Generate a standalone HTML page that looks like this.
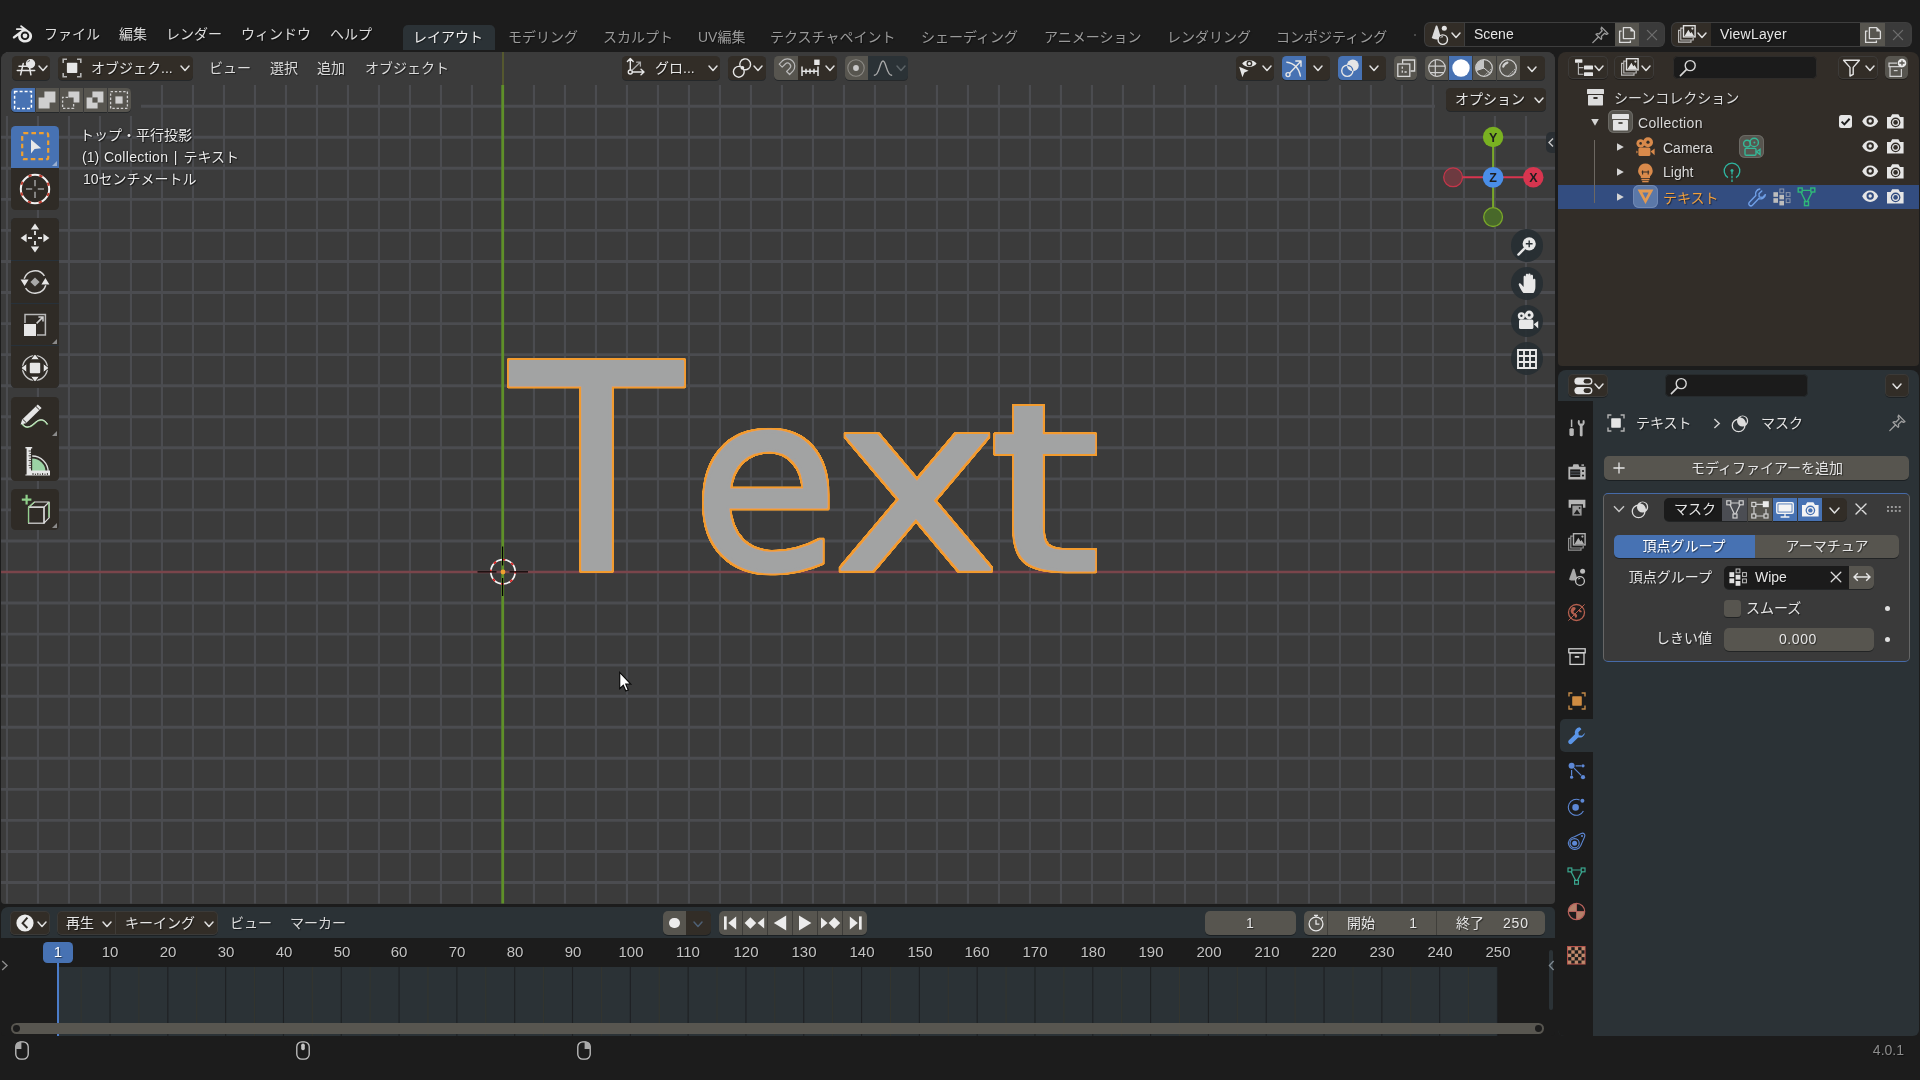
<!DOCTYPE html>
<html lang="ja"><head><meta charset="utf-8"><title>Blender</title>
<style>
html,body{margin:0;padding:0;background:#1c1c1c;}
body{width:1920px;height:1080px;overflow:hidden;position:relative;font-family:"Liberation Sans","Noto Sans CJK JP",sans-serif;}
#root{position:absolute;left:0;top:0;width:1920px;height:1080px;overflow:hidden;background:#1c1c1c;}
#root div,#root svg{position:absolute;}
.t{height:20px;line-height:20px;white-space:nowrap;font-size:14px;will-change:transform;text-shadow:1px 1px 1px rgba(0,0,0,.5);}
svg{overflow:visible;}
</style></head><body><div id="root">

<svg style="left:11.5px;top:24.5px;" width="21" height="19" viewBox="0 0 21 19"><path d="M1.2 11.4L9.8 5H4.8C3.6 5 3.6 3.2 4.8 3.2H10.6L8.6 1.9C7.6 1.2 8.6 -0.2 9.7 0.6L18 6.8C22.4 10.6 19.6 17.6 13.2 17.6C8.6 17.6 5.6 14.2 6.2 10.8L2.4 13.4C1.2 14.2 0.2 12.2 1.2 11.4Z" fill="#e8e8e8"/><circle cx="13" cy="10.8" r="4.3" fill="#1c1c1c"/><circle cx="13" cy="10.8" r="2.4" fill="#e8e8e8"/></svg>
<div class="t" style="top:24.3px;color:#dddddd;font-size:14px;left:44.3px;">ファイル</div>
<div class="t" style="top:24.3px;color:#dddddd;font-size:14px;left:118.5px;">編集</div>
<div class="t" style="top:24.3px;color:#dddddd;font-size:14px;left:165.8px;">レンダー</div>
<div class="t" style="top:24.3px;color:#dddddd;font-size:14px;left:240.8px;">ウィンドウ</div>
<div class="t" style="top:24.3px;color:#dddddd;font-size:14px;left:329.8px;">ヘルプ</div>
<div style="left:402.5px;top:25px;width:92.5px;height:25px;background:#2b3236;border-radius:5px 5px 0 0;"></div>
<div class="t" style="top:27.3px;color:#f0f0f0;font-size:14px;left:412.8px;">レイアウト</div>
<div class="t" style="top:27.3px;color:#9a9a9a;font-size:14px;left:508.2px;">モデリング</div>
<div class="t" style="top:27.3px;color:#9a9a9a;font-size:14px;left:603px;">スカルプト</div>
<div class="t" style="top:27.3px;color:#9a9a9a;font-size:14px;left:697.6px;">UV編集</div>
<div class="t" style="top:27.3px;color:#9a9a9a;font-size:14px;left:769.8px;">テクスチャペイント</div>
<div class="t" style="top:27.3px;color:#9a9a9a;font-size:14px;left:920.5px;">シェーディング</div>
<div class="t" style="top:27.3px;color:#9a9a9a;font-size:14px;left:1043.7px;">アニメーション</div>
<div class="t" style="top:27.3px;color:#9a9a9a;font-size:14px;left:1167.3px;">レンダリング</div>
<div class="t" style="top:27.3px;color:#9a9a9a;font-size:14px;left:1276.2px;">コンポジティング</div>
<div style="left:1414.2px;top:34.3px;width:1.8px;height:2px;background:#5a5a5a;border-radius:1px;"></div>
<div style="left:1425.3px;top:22.8px;width:239.2px;height:23.6px;background:#3e3e3e;border-radius:5px;box-shadow:0 0 0 1px #3e3e3e;"></div>
<div style="left:1425.3px;top:22.8px;width:39.2px;height:23.6px;background:#322d27;border-radius:5px 0 0 5px;"></div>
<div style="left:1465px;top:22.8px;width:149.6px;height:23.6px;background:#1b1b1b;"></div>
<div style="left:1614.6px;top:22.8px;width:24.8px;height:23.6px;background:#57554f;"></div>
<div style="left:1639.4px;top:22.8px;width:25.1px;height:23.6px;background:#3a3a3a;border-radius:0 5px 5px 0;"></div>
<svg style="left:1430.2px;top:24.2px;" width="22" height="22" viewBox="0 0 20 20"><path d="M5.2 1.8C6 1.2 6.6 1.4 7 2.4L10 12.6C8.6 14.2 4 14.6 1.6 12.8Z" fill="#dcdcdc"/><circle cx="13" cy="3.9" r="2.3" fill="#e4e4e4"/><circle cx="11.6" cy="14.2" r="4.3" stroke="#e4e4e4" stroke-width="1.3" fill="#322d27"/><path d="M9.6 12.4A2.6 2.6 0 0 1 11.8 11.6" stroke="#e4e4e4" stroke-width=".9" fill="none"/></svg>
<svg style="left:1450.8px;top:31.95px;" width="10" height="6.5" viewBox="0 0 10 6.5"><path d="M1 1 L5 5.5 L9 1" fill="none" stroke="#e0e0e0" stroke-width="1.5" stroke-linecap="round" stroke-linejoin="round"/></svg>
<div class="t" style="top:24.2px;color:#e6e6e6;font-size:14px;left:1474px;">Scene</div>
<svg style="left:1591px;top:24.5px;" width="20" height="20" viewBox="0 0 20 20"><g stroke="#9c9c9c" stroke-width="1.3" fill="none" stroke-linejoin="round" stroke-linecap="round"><path d="M10.6 2.2L17 8.6L15.4 9.4L13.6 8.2L10.4 11.4C11 12.8 10.8 13.6 10.2 14.4L5 9.2C5.8 8.6 6.6 8.4 8 9L11.2 5.8L10 4Z"/><path d="M7.4 12L1.8 17.6"/></g></svg>
<svg style="left:1618px;top:25.6px;" width="18" height="18" viewBox="0 0 18 18"><g stroke="#dcdcdc" stroke-width="1.3" fill="none" stroke-linejoin="round"><path d="M5.4 1.6H12.6L16.4 5.4V12.6H5.4Z"/><path d="M3.6 5.2H1.6V16.4H12.4V14.4"/></g><path d="M12.4 1.8V5.6H16.2Z" fill="#dcdcdc"/></svg>
<svg style="left:1646px;top:28.8px;" width="12" height="12" viewBox="0 0 12 12"><path d="M1.4 1.4L10.6 10.6M10.6 1.4L1.4 10.6" stroke="#6e6e6e" stroke-width="1.3" stroke-linecap="round"/></svg>
<div style="left:1671.5px;top:22.8px;width:239px;height:23.6px;background:#3e3e3e;border-radius:5px;box-shadow:0 0 0 1px #3e3e3e;"></div>
<div style="left:1671.5px;top:22.8px;width:39.1px;height:23.6px;background:#322d27;border-radius:5px 0 0 5px;"></div>
<div style="left:1711.1px;top:22.8px;width:149.3px;height:23.6px;background:#1b1b1b;"></div>
<div style="left:1860.4px;top:22.8px;width:25px;height:23.6px;background:#57554f;"></div>
<div style="left:1885.4px;top:22.8px;width:25.1px;height:23.6px;background:#3a3a3a;border-radius:0 5px 5px 0;"></div>
<svg style="left:1676.5px;top:24.4px;" width="20" height="20" viewBox="0 0 20 20"><g stroke="#e0e0e0" stroke-width="1.2" fill="none" opacity=".8"><path d="M3.6 6.4H1.6V18.2H14V16.2"/><path d="M5.8 4.2H3.8V16H16.2V14"/></g><rect x="6.5" y="1.7" width="11.6" height="11.2" fill="#322d27" stroke="#e0e0e0" stroke-width="1.4"/><path d="M7.6 12L11.4 5.8L13.4 9.2L14.6 8L17 12Z" fill="#e0e0e0"/><circle cx="15.4" cy="4.6" r="1.1" fill="#e0e0e0"/></svg>
<svg style="left:1697.2px;top:31.95px;" width="10" height="6.5" viewBox="0 0 10 6.5"><path d="M1 1 L5 5.5 L9 1" fill="none" stroke="#e0e0e0" stroke-width="1.5" stroke-linecap="round" stroke-linejoin="round"/></svg>
<div class="t" style="top:24.2px;color:#e6e6e6;font-size:14px;letter-spacing:0.2px;left:1720.3px;">ViewLayer</div>
<svg style="left:1864px;top:25.6px;" width="18" height="18" viewBox="0 0 18 18"><g stroke="#dcdcdc" stroke-width="1.3" fill="none" stroke-linejoin="round"><path d="M5.4 1.6H12.6L16.4 5.4V12.6H5.4Z"/><path d="M3.6 5.2H1.6V16.4H12.4V14.4"/></g><path d="M12.4 1.8V5.6H16.2Z" fill="#dcdcdc"/></svg>
<svg style="left:1892px;top:28.8px;" width="12" height="12" viewBox="0 0 12 12"><path d="M1.4 1.4L10.6 10.6M10.6 1.4L1.4 10.6" stroke="#6e6e6e" stroke-width="1.3" stroke-linecap="round"/></svg>
<div id="vp" style="left:1px;top:52px;width:1554px;height:851.6px;background:#3b3b3b;border-radius:8px 8px 4px 4px;overflow:hidden;">
<svg style="left:0px;top:0px;" width="1554" height="851.6" viewBox="1 52 1554 851.6"><path d="M6.95 52 V903.6 M37.95 52 V903.6 M68.95 52 V903.6 M99.95 52 V903.6 M130.95 52 V903.6 M161.95 52 V903.6 M192.95 52 V903.6 M223.95 52 V903.6 M254.95 52 V903.6 M285.95 52 V903.6 M316.95 52 V903.6 M347.95 52 V903.6 M378.95 52 V903.6 M409.95 52 V903.6 M440.95 52 V903.6 M471.95 52 V903.6 M533.95 52 V903.6 M564.95 52 V903.6 M595.95 52 V903.6 M626.95 52 V903.6 M657.95 52 V903.6 M688.95 52 V903.6 M719.95 52 V903.6 M750.95 52 V903.6 M781.95 52 V903.6 M812.95 52 V903.6 M843.95 52 V903.6 M874.95 52 V903.6 M905.95 52 V903.6 M936.95 52 V903.6 M967.95 52 V903.6 M998.95 52 V903.6 M1029.95 52 V903.6 M1060.95 52 V903.6 M1091.95 52 V903.6 M1122.95 52 V903.6 M1153.95 52 V903.6 M1184.95 52 V903.6 M1215.95 52 V903.6 M1246.95 52 V903.6 M1277.95 52 V903.6 M1308.95 52 V903.6 M1339.95 52 V903.6 M1370.95 52 V903.6 M1401.95 52 V903.6 M1432.95 52 V903.6 M1463.95 52 V903.6 M1494.95 52 V903.6 M1525.95 52 V903.6 M1556.95 52 V903.6" stroke="#4b4c50" stroke-width="2.1" fill="none"/><path d="M1 75.15 H1555 M1 106.20 H1555 M1 137.26 H1555 M1 168.31 H1555 M1 199.36 H1555 M1 230.42 H1555 M1 261.47 H1555 M1 292.52 H1555 M1 323.58 H1555 M1 354.63 H1555 M1 385.68 H1555 M1 416.74 H1555 M1 447.79 H1555 M1 478.84 H1555 M1 509.89 H1555 M1 540.95 H1555 M1 603.05 H1555 M1 634.11 H1555 M1 665.16 H1555 M1 696.21 H1555 M1 727.26 H1555 M1 758.32 H1555 M1 789.37 H1555 M1 820.42 H1555 M1 851.48 H1555 M1 882.53 H1555" stroke="#4b4c50" stroke-width="2.9" fill="none"/><path d="M1 571.9 H1555" stroke="#7a454b" stroke-width="2.5" fill="none"/><path d="M502.7 52 V903.6" stroke="#5f9029" stroke-width="2.8" fill="none"/><defs><clipPath id="tclip" clipPathUnits="userSpaceOnUse"><rect x="980" y="405.9" width="140" height="200"/></clipPath><filter id="selol" x="-3%" y="-6%" width="106%" height="112%"><feMorphology in="SourceAlpha" operator="dilate" radius="1.7" result="d"/><feGaussianBlur in="d" stdDeviation="0.45" result="db"/><feComponentTransfer in="db" result="dd"><feFuncA type="linear" slope="2.2" intercept="-0.55"/></feComponentTransfer><feFlood flood-color="#f29b2e"/><feComposite in2="dd" operator="in" result="o"/><feMerge><feMergeNode in="o"/><feMergeNode in="SourceGraphic"/></feMerge></filter></defs><g filter="url(#selol)"><text transform="matrix(0.9729 0 0 0.9951 511.21 569.60)" x="0" y="0" font-family="DejaVu Sans, sans-serif" font-size="287" stroke-linejoin="round" fill="#a2a3a3" stroke="#a2a3a3" stroke-width="3.049">T</text><text transform="matrix(0.8298 0 0 0.8500 692.25 568.64)" x="0" y="0" font-family="DejaVu Sans, sans-serif" font-size="287" stroke-linejoin="round" fill="#a2a3a3" stroke="#a2a3a3" stroke-width="3.572">e</text><text transform="matrix(0.9698 0 0 0.8537 834.08 569.40)" x="0" y="0" font-family="DejaVu Sans, sans-serif" font-size="287" stroke-linejoin="round" fill="#a2a3a3" stroke="#a2a3a3" stroke-width="3.290">x</text><g clip-path="url(#tclip)"><text transform="matrix(0.9872 0 0 0.8566 989.28 570.00)" x="0" y="0" font-family="DejaVu Sans, sans-serif" font-size="287" stroke-linejoin="round" fill="#a2a3a3" stroke="#a2a3a3" stroke-width="3.254">t</text></g></g></svg>
</div>
<div style="left:1px;top:52px;width:1554px;height:33px;background:#3b3b3b;border-radius:8px 8px 0 0;"></div>
<div style="left:501.6px;top:52px;width:2.3px;height:33px;background:#55582f;"></div>
<div style="left:1px;top:85px;width:140px;height:30.5px;background:#3b3b3b;"></div>
<div style="left:1434.5px;top:85px;width:120.5px;height:30.5px;background:#3b3b3b;"></div>
<div style="left:12px;top:56px;width:38px;height:23.5px;background:#322d27;border-radius:4.5px;box-shadow:0 1px 0 rgba(20,25,30,.55);"></div>
<svg style="left:16px;top:57.5px;" width="20" height="20" viewBox="0 0 20 20"><g stroke="#e6e6e6" stroke-width="1.5" fill="none" stroke-linecap="round"><path d="M3 8.2H10.5M1.3 12.4H18.7M7.2 5.6L4.6 16.8M13.7 10.3L14.9 16.8"/></g><circle cx="14.5" cy="5.7" r="4.7" fill="#e6e6e6"/><path d="M11.5 4.3A3.3 3.3 0 0 1 14 2.6" stroke="#555" stroke-width="1" fill="none"/></svg>
<svg style="left:37.6px;top:65.45px;" width="10" height="6.5" viewBox="0 0 10 6.5"><path d="M1 1 L5 5.5 L9 1" fill="none" stroke="#e0e0e0" stroke-width="1.5" stroke-linecap="round" stroke-linejoin="round"/></svg>
<div style="left:58px;top:56px;width:135px;height:23.5px;background:#322d27;border-radius:4.5px;box-shadow:0 1px 0 rgba(20,25,30,.55);"></div>
<svg style="left:62px;top:57.5px;" width="20" height="20" viewBox="0 0 20 20"><path d="M1.2 5V1.3H5M15 1.3H18.8V5M18.8 15V18.7H15M5 18.7H1.2V15" stroke="#b4b4b4" stroke-width="1.6" fill="none"/><rect x="4.9" y="4.7" width="10.4" height="10.4" rx="0.8" fill="#e6e6e6"/></svg>
<div class="t" style="top:57.5px;color:#e6e6e6;font-size:14px;left:90.5px;">オブジェク...</div>
<svg style="left:179.5px;top:65.45px;" width="10" height="6.5" viewBox="0 0 10 6.5"><path d="M1 1 L5 5.5 L9 1" fill="none" stroke="#e0e0e0" stroke-width="1.5" stroke-linecap="round" stroke-linejoin="round"/></svg>
<div class="t" style="top:57.5px;color:#dcdcdc;font-size:14px;left:209px;">ビュー</div>
<div class="t" style="top:57.5px;color:#dcdcdc;font-size:14px;left:270px;">選択</div>
<div class="t" style="top:57.5px;color:#dcdcdc;font-size:14px;left:317px;">追加</div>
<div class="t" style="top:57.5px;color:#dcdcdc;font-size:14px;left:364.5px;">オブジェクト</div>
<div style="left:622px;top:56px;width:98px;height:23.5px;background:#322d27;border-radius:4.5px;box-shadow:0 1px 0 rgba(20,25,30,.55);"></div>
<svg style="left:623.5px;top:55.5px;" width="22" height="22" viewBox="0 0 22 22"><g stroke="#e6e6e6" stroke-width="1.4" fill="none" stroke-linecap="round" stroke-linejoin="round"><path d="M6.3 14V3M3.4 5.6L6.3 2.6L9.2 5.6M8.3 16H19.5M17 13.2L20 16L17 18.8"/><circle cx="6.3" cy="16" r="2"/></g><g stroke="#a8a8a8" stroke-width="1.3" fill="none" stroke-linecap="round"><path d="M8 14.3L16 6.5M12.6 6.2H16.4V10"/></g></svg>
<div class="t" style="top:57.5px;color:#e6e6e6;font-size:14px;left:654.5px;">グロ...</div>
<svg style="left:707.5px;top:65.45px;" width="10" height="6.5" viewBox="0 0 10 6.5"><path d="M1 1 L5 5.5 L9 1" fill="none" stroke="#e0e0e0" stroke-width="1.5" stroke-linecap="round" stroke-linejoin="round"/></svg>
<div style="left:728px;top:56px;width:38px;height:23.5px;background:#322d27;border-radius:4.5px;box-shadow:0 1px 0 rgba(20,25,30,.55);"></div>
<svg style="left:732px;top:57.5px;" width="20" height="20" viewBox="0 0 20 20"><g stroke="#e6e6e6" stroke-width="1.4" fill="none"><circle cx="6.8" cy="13.8" r="5.4"/><path d="M8.2 8.4A5.4 5.4 0 1 1 12 11.6"/></g><circle cx="10.4" cy="9.8" r="1.9" fill="#e6e6e6"/></svg>
<svg style="left:753.4px;top:65.45px;" width="10" height="6.5" viewBox="0 0 10 6.5"><path d="M1 1 L5 5.5 L9 1" fill="none" stroke="#e0e0e0" stroke-width="1.5" stroke-linecap="round" stroke-linejoin="round"/></svg>
<div style="left:774px;top:56px;width:23.5px;height:23.5px;background:#57554f;border-radius:4.5px 0 0 4.5px;box-shadow:0 1px 0 rgba(20,25,30,.55);"></div>
<div style="left:797.5px;top:56px;width:39.5px;height:23.5px;background:#322d27;border-radius:0 4.5px 4.5px 0;box-shadow:0 1px 0 rgba(20,25,30,.55);"></div>
<svg style="left:775.8px;top:57.5px;" width="20" height="20" viewBox="0 0 20 20"><path d="M3.2 7.6L6.2 10.6L9.3 7.5A3.1 3.1 0 0 1 13.7 11.9L10.6 15L13.6 18L16.9 14.7A7.4 7.4 0 0 0 6.4 4.3Z" transform="translate(0,-1.5)" stroke="#b9b9b9" stroke-width="1.2" fill="none" stroke-linejoin="round"/></svg>
<svg style="left:799.5px;top:56.5px;" width="20" height="20" viewBox="0 0 20 20"><path d="M2 9.5V19M18 9.5V19M2 14.3H18M6 11.8V16.8M10 11.8V16.8M14 11.8V16.8" stroke="#e6e6e6" stroke-width="1.5" fill="none"/><rect x="14.2" y="2.6" width="5.4" height="5.4" fill="#e6e6e6"/></svg>
<svg style="left:824.7px;top:65.45px;" width="10" height="6.5" viewBox="0 0 10 6.5"><path d="M1 1 L5 5.5 L9 1" fill="none" stroke="#e0e0e0" stroke-width="1.5" stroke-linecap="round" stroke-linejoin="round"/></svg>
<div style="left:845px;top:56px;width:23px;height:23.5px;background:#57554f;border-radius:4.5px 0 0 4.5px;box-shadow:0 1px 0 rgba(20,25,30,.55);"></div>
<div style="left:868px;top:56px;width:40px;height:23.5px;background:#2b3236;border-radius:0 4.5px 4.5px 0;box-shadow:0 1px 0 rgba(20,25,30,.55);"></div>
<svg style="left:846.4px;top:57.5px;" width="20" height="20" viewBox="0 0 20 20"><circle cx="10" cy="10" r="8.2" stroke="#8d8b86" stroke-width="1.1" fill="none"/><circle cx="10" cy="10" r="2.9" fill="#c8c8c8"/></svg>
<svg style="left:873px;top:57.5px;" width="20" height="20" viewBox="0 0 20 20"><path d="M1.4 17.3C6.5 17.3 6.8 3 10 3C13.2 3 13.5 17.3 18.6 17.3" stroke="#aaa" stroke-width="1.4" fill="none" stroke-linecap="round"/></svg>
<svg style="left:895.8px;top:65.45px;" width="10" height="6.5" viewBox="0 0 10 6.5"><path d="M1 1 L5 5.5 L9 1" fill="none" stroke="#5d6468" stroke-width="1.5" stroke-linecap="round" stroke-linejoin="round"/></svg>
<div style="left:1236px;top:56px;width:38px;height:23.5px;background:#322d27;border-radius:4.5px;box-shadow:0 1px 0 rgba(20,25,30,.55);"></div>
<svg style="left:1238px;top:57.5px;" width="20" height="20" viewBox="0 0 20 20"><path d="M4.2 5.6C7 1 15.6 1 18.6 5.6C15.6 10.2 7 10.2 4.2 5.6Z" fill="#e6e6e6"/><circle cx="11.4" cy="5.4" r="2.9" fill="#322d27"/><circle cx="11.4" cy="5.4" r="1.5" fill="#e6e6e6"/><path d="M1.2 8.8L10.6 12.8L6.4 14.4L4.4 19.2Z" fill="#e6e6e6"/></svg>
<svg style="left:1261.6px;top:65.45px;" width="10" height="6.5" viewBox="0 0 10 6.5"><path d="M1 1 L5 5.5 L9 1" fill="none" stroke="#e0e0e0" stroke-width="1.5" stroke-linecap="round" stroke-linejoin="round"/></svg>
<div style="left:1282px;top:56px;width:23.5px;height:23.5px;background:#4772b3;border-radius:4.5px 0 0 4.5px;box-shadow:0 1px 0 rgba(20,25,30,.55);"></div>
<div style="left:1305.5px;top:56px;width:24.5px;height:23.5px;background:#322d27;border-radius:0 4.5px 4.5px 0;box-shadow:0 1px 0 rgba(20,25,30,.55);"></div>
<svg style="left:1283.6px;top:57.5px;" width="20" height="20" viewBox="0 0 20 20"><g stroke="#e6e6e6" stroke-width="1.4" fill="none" stroke-linecap="round" stroke-linejoin="round"><path d="M2.8 4.2C10 5 15.2 10.4 16.4 18"/><path d="M5.6 15.2L16.6 3.4M11.8 3H17V8.2"/><circle cx="4" cy="16.6" r="2" fill="#4772b3"/></g></svg>
<svg style="left:1312.6px;top:65.45px;" width="10" height="6.5" viewBox="0 0 10 6.5"><path d="M1 1 L5 5.5 L9 1" fill="none" stroke="#e0e0e0" stroke-width="1.5" stroke-linecap="round" stroke-linejoin="round"/></svg>
<div style="left:1338px;top:56px;width:23.5px;height:23.5px;background:#4772b3;border-radius:4.5px 0 0 4.5px;box-shadow:0 1px 0 rgba(20,25,30,.55);"></div>
<div style="left:1361.5px;top:56px;width:24.5px;height:23.5px;background:#322d27;border-radius:0 4.5px 4.5px 0;box-shadow:0 1px 0 rgba(20,25,30,.55);"></div>
<svg style="left:1340px;top:57.5px;" width="20" height="20" viewBox="0 0 20 20"><circle cx="12.8" cy="7.4" r="5.9" fill="#e6e6e6"/><circle cx="7.3" cy="12.8" r="5.6" stroke="#e6e6e6" stroke-width="1.4" fill="none"/><path d="M7.6 7.4A5.6 5.6 0 0 1 12.8 12.6" stroke="#4772b3" stroke-width="1.3" fill="none"/></svg>
<svg style="left:1368.5px;top:65.45px;" width="10" height="6.5" viewBox="0 0 10 6.5"><path d="M1 1 L5 5.5 L9 1" fill="none" stroke="#e0e0e0" stroke-width="1.5" stroke-linecap="round" stroke-linejoin="round"/></svg>
<div style="left:1394px;top:56px;width:23px;height:23.5px;background:#57554f;border-radius:4.5px;box-shadow:0 1px 0 rgba(20,25,30,.55);"></div>
<svg style="left:1395.6px;top:57.5px;" width="20" height="20" viewBox="0 0 20 20"><g stroke="#d8d8d8" stroke-width="1.3" fill="none"><path d="M6.6 5.6V2H18.6V13H14.6"/><rect x="1.8" y="6" width="12" height="12.4"/><path d="M6.3 8.6V14H11" stroke-dasharray="2.2 1.6"/></g></svg>
<div style="left:1425px;top:56px;width:23.3px;height:24px;background:#57554f;border-radius:4.5px 0 0 4.5px;box-shadow:0 1px 0 rgba(20,25,30,.55);"></div>
<div style="left:1449px;top:56px;width:23.3px;height:24px;background:#4772b3;box-shadow:0 1px 0 rgba(20,25,30,.55);"></div>
<div style="left:1473px;top:56px;width:23.3px;height:24px;background:#57554f;box-shadow:0 1px 0 rgba(20,25,30,.55);"></div>
<div style="left:1497px;top:56px;width:23.3px;height:24px;background:#57554f;box-shadow:0 1px 0 rgba(20,25,30,.55);"></div>
<div style="left:1520.3px;top:56px;width:24.7px;height:24px;background:#322d27;border-radius:0 4.5px 4.5px 0;box-shadow:0 1px 0 rgba(20,25,30,.55);"></div>
<svg style="left:1426.6px;top:57.7px;" width="20" height="20" viewBox="0 0 20 20"><g stroke="#d0d0d0" stroke-width="1.2" fill="none"><circle cx="10" cy="10" r="8.3"/><path d="M1.8 8.2H18.2M8.3 1.8V18.2M3 14.6H17"/></g></svg>
<svg style="left:1450.6px;top:57.7px;" width="20" height="20" viewBox="0 0 20 20"><circle cx="10" cy="10" r="8.7" fill="#fff"/></svg>
<svg style="left:1474.4px;top:57.7px;" width="20" height="20" viewBox="0 0 20 20"><circle cx="10" cy="10" r="8.3" stroke="#d0d0d0" stroke-width="1.2" fill="none"/><path d="M10 1.7V10L2.4 12.6A8.3 8.3 0 0 1 10 1.7Z" fill="#c4c4c4"/><path d="M2.4 12.6L10 10L16.4 15.6" stroke="#d0d0d0" stroke-width="1" fill="none"/><path d="M12.5 17.2L17.8 12M14.8 17L18.2 13.6M10.4 17.6L17 11" stroke="#c4c4c4" stroke-width=".9" stroke-dasharray="1.5 1.2"/></svg>
<svg style="left:1498.4px;top:57.7px;" width="20" height="20" viewBox="0 0 20 20"><circle cx="10" cy="10" r="8.3" stroke="#d0d0d0" stroke-width="1.2" fill="none"/><path d="M5.2 8.6A6 6 0 0 1 9.4 4.6" stroke="#cfcfcf" stroke-width="2.2" stroke-linecap="round" fill="none"/><path d="M12.5 17.2L17.8 12M14.8 17L18.2 13.6M10.4 17.6L17 11" stroke="#c4c4c4" stroke-width=".9" stroke-dasharray="1.5 1.2"/></svg>
<svg style="left:1527.3px;top:65.55px;" width="10" height="6.5" viewBox="0 0 10 6.5"><path d="M1 1 L5 5.5 L9 1" fill="none" stroke="#e0e0e0" stroke-width="1.5" stroke-linecap="round" stroke-linejoin="round"/></svg>
<div style="left:11px;top:88px;width:24px;height:24px;background:#4772b3;border-radius:4.5px 0 0 4.5px;box-shadow:0 1px 0 rgba(20,25,30,.55);"></div>
<div style="left:35.7px;top:88px;width:23.3px;height:24px;background:#57554f;box-shadow:0 1px 0 rgba(20,25,30,.55);"></div>
<div style="left:59.7px;top:88px;width:23.3px;height:24px;background:#57554f;box-shadow:0 1px 0 rgba(20,25,30,.55);"></div>
<div style="left:83.7px;top:88px;width:23.3px;height:24px;background:#57554f;box-shadow:0 1px 0 rgba(20,25,30,.55);"></div>
<div style="left:107.7px;top:88px;width:23.3px;height:24px;background:#57554f;border-radius:0 4.5px 4.5px 0;box-shadow:0 1px 0 rgba(20,25,30,.55);"></div>
<svg style="left:13px;top:90px;" width="20" height="20" viewBox="0 0 20 20"><rect x="1.6" y="1.6" width="16.8" height="16.8" stroke="#fff" stroke-width="1.5" stroke-dasharray="3 2" fill="none"/></svg>
<svg style="left:37px;top:90px;" width="20" height="20" viewBox="0 0 20 20"><path d="M7.4 1.6H18.4V12.6H12.6V18.4H1.6V7.4H7.4Z" fill="#cfcfcf"/></svg>
<svg style="left:61px;top:90px;" width="20" height="20" viewBox="0 0 20 20"><path d="M7.4 1.6H18.4V12.6H12.6V7.4H7.4Z" fill="#cfcfcf"/><path d="M7 7.4H1.6V18.4H12.6V13" stroke="#cfcfcf" stroke-width="1.3" stroke-dasharray="2.4 1.8" fill="none"/></svg>
<svg style="left:85px;top:90px;" width="20" height="20" viewBox="0 0 20 20"><path d="M7.4 1.6H18.4V12.6H12.6V18.4H1.6V7.4H7.4Z" fill="#cfcfcf"/><rect x="7.4" y="7.4" width="5.2" height="5.2" fill="#57554f"/></svg>
<svg style="left:109px;top:90px;" width="20" height="20" viewBox="0 0 20 20"><rect x="1.6" y="1.6" width="16.8" height="16.8" stroke="#cfcfcf" stroke-width="1.3" stroke-dasharray="2.4 1.8" fill="none"/><rect x="6.4" y="6.4" width="7.2" height="7.2" fill="#cfcfcf"/></svg>
<div style="left:1446px;top:88px;width:99.6px;height:23px;background:#322d27;border-radius:4.5px;box-shadow:0 1px 0 rgba(20,25,30,.55);"></div>
<div class="t" style="top:89.4px;color:#e6e6e6;font-size:14px;left:1455.3px;">オプション</div>
<svg style="left:1533.7px;top:97.35px;" width="10" height="6.5" viewBox="0 0 10 6.5"><path d="M1 1 L5 5.5 L9 1" fill="none" stroke="#e0e0e0" stroke-width="1.5" stroke-linecap="round" stroke-linejoin="round"/></svg>
<div style="left:11px;top:126px;width:48.2px;height:41.7px;background:#4772b3;border-radius:4.5px 4.5px 0 0;"></div>
<div style="left:11px;top:167.7px;width:48.2px;height:42.1px;background:#2f2b26;border-radius:0 0 4.5px 4.5px;"></div>
<svg style="left:19px;top:130px;" width="32" height="32" viewBox="0 0 32 32"><rect x="3.2" y="3.2" width="26" height="26" rx="1.5" stroke="#f0a030" stroke-width="2.2" stroke-dasharray="4.6 3.1" fill="none"/><path d="M12 9.4L22.2 18.2L15.6 18.9L12 23.4Z" fill="#e8e8e8"/></svg>
<svg style="left:51.5px;top:160.5px;" width="5" height="5" viewBox="0 0 5 5"><path d="M5 0V5H0Z" fill="#9bb0d0"/></svg>
<svg style="left:19px;top:173px;" width="32" height="32" viewBox="0 0 32 32"><circle cx="16" cy="16" r="14.2" stroke="#f2f2f2" stroke-width="2" fill="none"/><circle cx="16" cy="16" r="14.2" stroke="#c0392b" stroke-width="2" stroke-dasharray="3.2 7.95" stroke-dashoffset="-4" fill="none"/><path d="M16 7V13.2M16 18.8V25M7 16H13.2M18.8 16H25" stroke="#9a9a9a" stroke-width="1.6"/></svg>
<div style="left:11px;top:218.3px;width:48.2px;height:170.1px;background:#27313a;border-radius:4.5px;"></div>
<div style="left:11px;top:218.3px;width:48.2px;height:42px;background:#2f2b26;border-radius:4.5px 4.5px 0 0;"></div>
<div style="left:11px;top:261px;width:48.2px;height:41.9px;background:#2f2b26;"></div>
<div style="left:11px;top:303.6px;width:48.2px;height:41.9px;background:#2f2b26;"></div>
<div style="left:11px;top:346.2px;width:48.2px;height:42.2px;background:#2f2b26;border-radius:0 0 4.5px 4.5px;"></div>
<svg style="left:18.9px;top:222.3px;" width="32" height="32" viewBox="0 0 32 32"><g fill="#e6e6e6"><path d="M16 1.6L20.2 7.6H11.8Z M16 30.4L20.2 24.4H11.8Z M1.6 16L7.6 11.8V20.2Z M30.4 16L24.4 11.8V20.2Z"/></g><path d="M16 9V13M16 19V23M9 16H13M19 16H23" stroke="#e6e6e6" stroke-width="1.8"/></svg>
<svg style="left:18.9px;top:265.7px;" width="32" height="32" viewBox="0 0 32 32"><g stroke="#d8d8d8" stroke-width="1.5" fill="none"><path d="M5.2 12.8A11.3 11.3 0 0 1 25.4 9.8"/><path d="M26.8 19.2A11.3 11.3 0 0 1 6.6 22.2"/></g><path d="M1.6 13.6H9.6L5.6 20Z M22.4 18.4H30.4L26.4 12Z" fill="#e6e6e6"/><path d="M16 11.4L20.6 16L16 20.6L11.4 16Z" fill="#a8a8a8"/></svg>
<svg style="left:18.9px;top:309px;" width="32" height="32" viewBox="0 0 32 32"><path d="M6 14V5.6H26.4V26H18" stroke="#b8b8b8" stroke-width="1.5" fill="none"/><rect x="5" y="15" width="12" height="12" fill="#e6e6e6"/><path d="M17.6 14.4L23.6 8.4M19.4 8H24V12.6" stroke="#d0d0d0" stroke-width="1.5" fill="none"/></svg>
<svg style="left:51.5px;top:338.5px;" width="5" height="5" viewBox="0 0 5 5"><path d="M5 0V5H0Z" fill="#8a8a8a"/></svg>
<svg style="left:18.9px;top:351.8px;" width="32" height="32" viewBox="0 0 32 32"><circle cx="16" cy="16" r="12.4" stroke="#c8c8c8" stroke-width="1.4" fill="none"/><g fill="#e6e6e6" stroke="#2f2b26" stroke-width="1"><path d="M16 1.8L20.6 7.8H11.4Z M16 30.2L20.6 24.2H11.4Z M1.8 16L7.8 11.4V20.6Z M30.2 16L24.2 11.4V20.6Z"/></g><rect x="10.8" y="10.8" width="10.4" height="10.4" rx="1" fill="#e6e6e6"/></svg>
<div style="left:11px;top:396.7px;width:48.2px;height:83.9px;background:#3a3a38;border-radius:4.5px;"></div>
<div style="left:11px;top:396.7px;width:48.2px;height:40.9px;background:#2f2b26;border-radius:4.5px 4.5px 0 0;"></div>
<div style="left:11px;top:438.3px;width:48.2px;height:42.3px;background:#2f2b26;border-radius:0 0 4.5px 4.5px;"></div>
<svg style="left:18.9px;top:401.5px;" width="32" height="32" viewBox="0 0 32 32"><path d="M2.8 21.2C6 27 11 26 15.4 21.6C19.6 17.4 24.4 16 28.4 22.6" stroke="#8fd08a" stroke-width="1.5" fill="none"/><path d="M3.2 21.6C6.4 26.6 11 25.4 15.4 21.2C19.6 17 24.6 15.8 28.6 22.2" stroke="#e8e8e8" stroke-width="1" fill="none" opacity=".8"/><path d="M1.6 22.4L3.2 17.6L18.8 2.4L22.6 6L7 21.2Z" fill="#e6e6e6"/><path d="M16.8 4.3L20.6 8M3.6 17.2L7.4 20.8" stroke="#2f2b26" stroke-width="1"/></svg>
<svg style="left:51.5px;top:430.5px;" width="5" height="5" viewBox="0 0 5 5"><path d="M5 0V5H0Z" fill="#8a8a8a"/></svg>
<svg style="left:18.9px;top:443.5px;" width="32" height="32" viewBox="0 0 32 32"><path d="M13.2 28V14.6A13.4 13.4 0 0 1 26.6 28Z" fill="#9bd3a4"/><path d="M13.2 12A16 16 0 0 1 29.2 28" stroke="#e0e0e0" stroke-width="1.3" fill="none"/><path d="M6.4 3H13.2V4.6H12V26.6H31V31.4H6.4V30.4H7.6V4.6H6.4Z" fill="#e6e6e6"/><path d="M9.6 7H12M10.4 9.4H12M9.6 11.8H12M10.4 14.2H12M9.6 16.6H12M10.4 19H12M9.6 21.4H12M10.4 23.8H12M14 29V31M16.4 29.6V31M18.8 29V31M21.2 29.6V31M23.6 29V31M26 29.6V31M28.4 29V31" stroke="#2f2b26" stroke-width=".9"/></svg>
<div style="left:11px;top:488.9px;width:48.2px;height:40.8px;background:#2f2b26;border-radius:4.5px;"></div>
<svg style="left:18.9px;top:493.5px;" width="32" height="32" viewBox="0 0 32 32"><path d="M9.6 13.2L15.6 8H30.2L25 13.2Z M25 13.2V29.2L30.2 23.6V8" stroke="#dcdcdc" stroke-width="1.2" fill="none" stroke-linejoin="round"/><rect x="9.6" y="13.2" width="15.4" height="16" stroke="#dcdcdc" stroke-width="1.2" fill="none"/><path d="M9.4 29V13.4L15.2 8.2M29.8 8.4V23.2" stroke="#8fd08a" stroke-width="1.1" fill="none"/><path d="M7.6 0.8V10.4M2.8 5.6H12.4" stroke="#8fd08a" stroke-width="2.2"/></svg>
<svg style="left:51.5px;top:522.5px;" width="5" height="5" viewBox="0 0 5 5"><path d="M5 0V5H0Z" fill="#8a8a8a"/></svg>
<div class="t" style="top:125.3px;color:#ececec;font-size:14px;left:80.2px;text-shadow:0 0 2px rgba(0,0,0,.75),1px 1px 1px rgba(0,0,0,.6);">トップ・平行投影</div>
<div class="t" style="top:147.3px;color:#ececec;font-size:14px;left:81.8px;text-shadow:0 0 2px rgba(0,0,0,.75),1px 1px 1px rgba(0,0,0,.6);">(1) <span style="letter-spacing:.29px;margin-left:.9px">Collection</span><span style="margin:0 2px 0 1.7px"> | </span>テキスト</div>
<div class="t" style="top:169.3px;color:#ececec;font-size:14px;left:82.8px;text-shadow:0 0 2px rgba(0,0,0,.75),1px 1px 1px rgba(0,0,0,.6);">10センチメートル</div>
<svg style="left:0px;top:0px;" width="1920" height="1080" viewBox="0 0 1920 1080"><path d="M1453.1 177.3H1533.1" stroke="#d8354f" stroke-width="2"/><path d="M1493.1 137.3V217.3" stroke="#7aa829" stroke-width="2"/><circle cx="1453.1" cy="177.3" r="9.4" fill="#6d3a40" stroke="#c5364a" stroke-width="1.3"/><circle cx="1493.1" cy="217.1" r="9.4" fill="#48682a" stroke="#7aa829" stroke-width="1.3"/><circle cx="1533.3" cy="177.3" r="10.2" fill="#d8354f"/><circle cx="1493.1" cy="137" r="10.2" fill="#79b121"/><circle cx="1493.1" cy="177.3" r="10.4" fill="#4a8ee8"/><text x="1533.3" y="181.8" font-family="Liberation Sans, sans-serif" font-weight="bold" font-size="12.5" text-anchor="middle" fill="#1e1e1e">X</text><text x="1493.1" y="141.5" font-family="Liberation Sans, sans-serif" font-weight="bold" font-size="12.5" text-anchor="middle" fill="#1e1e1e">Y</text><text x="1493.1" y="181.8" font-family="Liberation Sans, sans-serif" font-weight="bold" font-size="12.5" text-anchor="middle" fill="#1e1e1e">Z</text></svg>
<div style="left:1510.5px;top:229.3px;width:32.6px;height:32.6px;background:rgba(38,45,50,.88);border-radius:50%;"></div>
<div style="left:1510.5px;top:267px;width:32.6px;height:32.6px;background:rgba(38,45,50,.88);border-radius:50%;"></div>
<div style="left:1510.5px;top:304.9px;width:32.6px;height:32.6px;background:rgba(38,45,50,.88);border-radius:50%;"></div>
<div style="left:1510.5px;top:342.3px;width:32.6px;height:32.6px;background:rgba(38,45,50,.88);border-radius:50%;"></div>
<svg style="left:1514.8px;top:233.6px;" width="24" height="24" viewBox="0 0 24 24"><circle cx="14.2" cy="9.8" r="6.6" fill="#e8e8e8"/><path d="M9.6 14.4L3.4 20.6" stroke="#e8e8e8" stroke-width="2.4" stroke-linecap="round"/><path d="M14.2 6.4V13.2M10.8 9.8H17.6" stroke="#2b3236" stroke-width="1.4"/></svg>
<svg style="left:1514.8px;top:271.3px;" width="24" height="24" viewBox="0 0 24 24"><path d="M6.4 21.5C4.2 18.5 2.6 15.6 1.8 13.4C1.4 12 3 11.2 4 12.4L6.6 15.6V5.4C6.6 3.8 8.8 3.8 8.8 5.4V3.6C8.8 1.9 11.2 1.9 11.2 3.6V3.2C11.2 1.5 13.6 1.5 13.6 3.2V4.4C13.6 2.8 16 2.8 16 4.4V8.4C16 6.8 18.4 6.8 18.4 8.4V15.4C18.4 18.4 17.4 20 16.4 21.5Z" transform="translate(2,0.5)" fill="#e8e8e8"/></svg>
<svg style="left:1514.8px;top:309.2px;" width="24" height="24" viewBox="0 0 24 24"><circle cx="6.4" cy="6.8" r="3.6" fill="#e8e8e8"/><circle cx="14.2" cy="6" r="4.4" fill="#e8e8e8"/><rect x="4" y="10.6" width="14.4" height="9.4" rx="1.5" fill="#e8e8e8"/><path d="M18.8 15.2L23.2 12V19.4Z" fill="#e8e8e8"/><circle cx="6.4" cy="6.8" r="1.2" fill="#2b3236"/><circle cx="14.2" cy="6" r="1.5" fill="#2b3236"/></svg>
<svg style="left:1514.8px;top:346.6px;" width="24" height="24" viewBox="0 0 24 24"><path d="M3 3H21V21H3ZM9 3V21M15 3V21M3 9H21M3 15H21" stroke="#e8e8e8" stroke-width="1.9" fill="none"/></svg>
<div style="left:1545.5px;top:132px;width:9.5px;height:21px;background:rgba(40,46,50,.9);border-radius:5px 0 0 5px;"></div>
<svg style="left:1546.5px;top:137px;" width="8" height="11" viewBox="0 0 8 11"><path d="M6 1.5L2 5.5L6 9.5" stroke="#c8c8c8" stroke-width="1.4" fill="none"/></svg>
<svg style="left:0px;top:0px;" width="1920" height="1080" viewBox="0 0 1920 1080"><circle cx="503" cy="571.8" r="12.2" stroke="#f4f4f4" stroke-width="1.7" fill="none"/><circle cx="503" cy="571.8" r="12.2" stroke="#e02222" stroke-width="1.7" stroke-dasharray="3 6.58" stroke-dashoffset="1" fill="none"/><path d="M502.6 546.5V565.5M502.6 578V596M477.5 571.8H496.5M509.5 571.8H528" stroke="#000" stroke-width="1.25"/><circle cx="503" cy="572" r="2.4" fill="#f0a030"/></svg>
<svg style="left:617px;top:670px;" width="16" height="24" viewBox="0 0 16 24"><path d="M2.7 2.4V18.6L6.3 15.2L8.8 21L11.3 19.9L8.8 14.2H13.8Z" fill="#fff" stroke="#0a0a0a" stroke-width="1.2" stroke-linejoin="miter"/></svg>
<div style="left:1558px;top:52px;width:361px;height:313.7px;background:#322d28;border-radius:8px 8px 4px 4px;"></div>
<div style="left:1568.3px;top:55.7px;width:39.5px;height:23.6px;background:#322d27;border-radius:5px;box-shadow:inset 0 0 0 1px #3d3b39, 0 1px 0 rgba(15,15,15,.5);"></div>
<svg style="left:1573.5px;top:58px;" width="20" height="20" viewBox="0 0 20 20"><rect x="1" y="1.2" width="7.4" height="3.6" rx=".5" fill="#e4e4e4"/><rect x="10" y="7.6" width="9" height="3.9" rx=".5" fill="#e4e4e4"/><rect x="10" y="14.2" width="9" height="3.9" rx=".5" fill="#e4e4e4"/><path d="M4.4 5V16.2H9.4M4.4 9.6H9.4" stroke="#bdbdbd" stroke-width="1.1" fill="none"/></svg>
<svg style="left:1594.3px;top:64.75px;" width="10" height="6.5" viewBox="0 0 10 6.5"><path d="M1 1 L5 5.5 L9 1" fill="none" stroke="#e0e0e0" stroke-width="1.5" stroke-linecap="round" stroke-linejoin="round"/></svg>
<div style="left:1614.4px;top:55.7px;width:39.6px;height:23.6px;background:#322d27;border-radius:5px;box-shadow:inset 0 0 0 1px #3d3b39, 0 1px 0 rgba(15,15,15,.5);"></div>
<svg style="left:1619.5px;top:57px;" width="20" height="20" viewBox="0 0 20 20"><g stroke="#e0e0e0" stroke-width="1.2" fill="none" opacity=".8"><path d="M3.6 6.4H1.6V18.2H14V16.2"/><path d="M5.8 4.2H3.8V16H16.2V14"/></g><rect x="6.5" y="1.7" width="11.6" height="11.2" fill="#322d27" stroke="#e0e0e0" stroke-width="1.4"/><path d="M7.6 12L11.4 5.8L13.4 9.2L14.6 8L17 12Z" fill="#e0e0e0"/><circle cx="15.4" cy="4.6" r="1.1" fill="#e0e0e0"/></svg>
<svg style="left:1640.5px;top:64.75px;" width="10" height="6.5" viewBox="0 0 10 6.5"><path d="M1 1 L5 5.5 L9 1" fill="none" stroke="#e0e0e0" stroke-width="1.5" stroke-linecap="round" stroke-linejoin="round"/></svg>
<div style="left:1673.2px;top:55.7px;width:143.6px;height:23.6px;background:#1b1b1b;border-radius:5px;box-shadow:inset 0 0 0 1px #2e2c2a;"></div>
<svg style="left:1679px;top:58.5px;" width="18" height="18" viewBox="0 0 18 18"><circle cx="11.2" cy="6.6" r="5" stroke="#d8d8d8" stroke-width="1.4" fill="none"/><path d="M7.6 10.4L1.4 16.6" stroke="#d8d8d8" stroke-width="1.6" stroke-linecap="round"/></svg>
<div style="left:1838.2px;top:55.7px;width:39.6px;height:23.6px;background:#322d27;border-radius:5px;box-shadow:inset 0 0 0 1px #3d3b39, 0 1px 0 rgba(15,15,15,.5);"></div>
<svg style="left:1841.5px;top:58px;" width="20" height="20" viewBox="0 0 20 20"><path d="M1.6 2.2H17.4L11.2 9.4V16.4L8 18V9.4Z" stroke="#e4e4e4" stroke-width="1.4" fill="none" stroke-linejoin="round"/></svg>
<svg style="left:1864.5px;top:64.75px;" width="10" height="6.5" viewBox="0 0 10 6.5"><path d="M1 1 L5 5.5 L9 1" fill="none" stroke="#e0e0e0" stroke-width="1.5" stroke-linecap="round" stroke-linejoin="round"/></svg>
<div style="left:1884.7px;top:55.7px;width:23.7px;height:23.6px;background:#57554f;border-radius:5px;box-shadow:0 1px 0 rgba(15,15,15,.5);"></div>
<svg style="left:1886.8px;top:57.5px;" width="20" height="20" viewBox="0 0 20 20"><g stroke="#cfcfcf" stroke-width="1.2" fill="none"><path d="M10 5.2H2V8.6H15.4"/><path d="M3 8.6V18.4H14.4V11"/><path d="M6.8 12.6H10.6"/></g><circle cx="15" cy="5" r="4.3" fill="#ececec"/><path d="M15 2.4V7.6M12.4 5H17.6" stroke="#57554f" stroke-width="1.3"/></svg>
<div style="left:1558px;top:184.55px;width:361px;height:24.9px;background:#334d80;"></div>
<div style="left:1594px;top:140.3px;width:1.1px;height:62.9px;background:#6d6862;"></div>
<svg style="left:1587.1px;top:89px;" width="17" height="16.4" viewBox="0 0 17 16.4"><rect x="0" y="0" width="17" height="5" rx=".6" fill="#dcdcdc"/><rect x="1" y="6" width="15" height="10.4" rx=".6" fill="#dcdcdc"/><rect x="6.2" y="8" width="4.6" height="1.9" rx=".9" fill="#322d28"/></svg>
<div class="t" style="top:88px;color:#dadada;font-size:14px;left:1613.5px;">シーンコレクション</div>
<svg style="left:1590.7px;top:119.2px;" width="8" height="7" viewBox="0 0 8 7"><path d="M.2 0H7.8L4 6.8Z" fill="#d4d4d4"/></svg>
<div style="left:1608.4px;top:110.4px;width:24.2px;height:22.4px;background:#57554f;border-radius:6px;box-shadow:inset 0 0 0 1px #6b6964;"></div>
<svg style="left:1612.1px;top:114px;" width="17" height="16.4" viewBox="0 0 17 16.4"><rect x="0" y="0" width="17" height="5" rx=".6" fill="#e4e4e4"/><rect x="1" y="6" width="15" height="10.4" rx=".6" fill="#e4e4e4"/><rect x="6.2" y="8" width="4.6" height="1.9" rx=".9" fill="#57554f"/></svg>
<div class="t" style="top:112.8px;color:#dadada;font-size:14px;letter-spacing:0.33px;left:1638.3px;">Collection</div>
<div style="left:1839.2px;top:114.9px;width:13px;height:13.1px;background:#e6e6e6;border-radius:2.5px;"></div>
<svg style="left:1839.2px;top:114.9px;" width="13" height="13" viewBox="0 0 13 13"><path d="M2.6 6.6L5.4 9.4L10.6 3.8" stroke="#1d1d1d" stroke-width="2" fill="none"/></svg>
<svg style="left:1617.1px;top:143.2px;" width="7" height="8" viewBox="0 0 7 8"><path d="M0 .2L6.8 4L0 7.8Z" fill="#d4d4d4"/></svg>
<svg style="left:1635.6px;top:137px;" width="19" height="20" viewBox="0 0 19 20"><circle cx="4.6" cy="6.4" r="4.2" fill="#d98a4b"/><circle cx="12" cy="5.2" r="5" fill="#d98a4b"/><rect x="2.4" y="10.4" width="12" height="8.6" rx="1.6" fill="#d98a4b"/><path d="M14.6 14.6L18.6 11.6V18.2Z" fill="#d98a4b"/><circle cx="4.6" cy="6.4" r="1.3" fill="#322d28"/><circle cx="12" cy="5.2" r="1.6" fill="#322d28"/><path d="M2 15L.4 13.6V16.6Z" fill="#d98a4b"/></svg>
<div class="t" style="top:137.5px;color:#dadada;font-size:14px;left:1663.4px;">Camera</div>
<div style="left:1739.4px;top:135.4px;width:24.3px;height:22.6px;background:#57554f;border-radius:6px;box-shadow:inset 0 0 0 1px #6b6964;"></div>
<svg style="left:1742px;top:137px;" width="19" height="20" viewBox="0 0 19 20"><g stroke="#35b796" stroke-width="1.4" fill="none"><circle cx="5" cy="6.6" r="3.4"/><circle cx="12.2" cy="5.4" r="4.2"/><rect x="3" y="11.4" width="11" height="6.8" rx="1.2"/><path d="M14.6 14.8L18 12.4V17.6Z"/></g><circle cx="12.4" cy="5.4" r="1" fill="#35b796"/></svg>
<svg style="left:1617.1px;top:168.1px;" width="7" height="8" viewBox="0 0 7 8"><path d="M0 .2L6.8 4L0 7.8Z" fill="#d4d4d4"/></svg>
<svg style="left:1636.8px;top:162.5px;" width="17" height="20" viewBox="0 0 17 20"><path d="M8.4 .4A7.4 7.4 0 0 1 13 13.4V15H3.8V13.4A7.4 7.4 0 0 1 8.4 .4Z" fill="#d98a4b"/><rect x="4.4" y="15.8" width="8" height="1.5" fill="#d98a4b"/><rect x="5.2" y="17.9" width="6.4" height="1.4" fill="#d98a4b"/><path d="M5.6 7.4V11.6M11.2 7.4V11.6M4.6 9H12.2" stroke="#322d28" stroke-width="1.1"/></svg>
<div class="t" style="top:162.4px;color:#dadada;font-size:14px;left:1663.4px;">Light</div>
<svg style="left:1722px;top:162.1px;" width="20" height="21" viewBox="0 0 20 21"><path d="M6 15.6A7.8 7.8 0 1 1 14 15.6" stroke="#2eb5a0" stroke-width="1.3" fill="none"/><circle cx="10" cy="8.4" r="1.5" fill="#2eb5a0"/><path d="M10 10V20" stroke="#2eb5a0" stroke-width="1.3" stroke-dasharray="2.4 1.4"/></svg>
<svg style="left:1617.1px;top:193px;" width="7" height="8" viewBox="0 0 7 8"><path d="M0 .2L6.8 4L0 7.8Z" fill="#d4d4d4"/></svg>
<div style="left:1633.2px;top:185.4px;width:24.6px;height:22.6px;background:#5b78a8;border-radius:6px;box-shadow:inset 0 0 0 1px #7088b4;"></div>
<svg style="left:1636.2px;top:188px;" width="19" height="18" viewBox="0 0 19 18"><path d="M1.6 1.6H17.4L9.5 16Z M6.4 4.6H12.6L9.5 10.4Z" fill="#e39a52" fill-rule="evenodd"/></svg>
<div class="t" style="top:187.6px;color:#f2a03c;font-size:14px;left:1663.4px;">テキスト</div>
<svg style="left:1746.6px;top:187px;" width="20" height="20" viewBox="0 0 20 20"><path d="M12.2 1.6A5 5 0 0 0 8.2 8.2L1.8 14.8A2.1 2.1 0 0 0 4.8 17.8L11.2 11.2A5 5 0 0 0 17.8 7.2L15 10L11.6 9.6L11.4 6.4L14.2 3.6" transform="translate(.6,.4)" stroke="#6f9fe6" stroke-width="1.4" fill="none" stroke-linejoin="round" stroke-linecap="round"/></svg>
<svg style="left:1772.5px;top:187.5px;" width="18" height="19" viewBox="0 0 18 19"><rect x="0.4" y="4.2" width="4.6" height="4.6" fill="#bdbdbd"/><rect x="0.4" y="10.2" width="4.6" height="4.6" fill="#bdbdbd"/><rect x="6.4" y="6.8" width="4.6" height="4.6" fill="#bdbdbd"/><rect x="6.4" y="12.8" width="4.6" height="4.6" fill="#bdbdbd"/><g stroke="#8d97aa" stroke-width="1" fill="none"><rect x="6.9" y="1" width="3.8" height="3.8"/><rect x="13.2" y="4.6" width="3.8" height="3.8"/><rect x="13.2" y="10.8" width="3.8" height="3.8"/></g></svg>
<svg style="left:1796.8px;top:187.4px;" width="19" height="20" viewBox="0 0 19 20"><g stroke="#2fb878" stroke-width="1.4" fill="none"><path d="M3.4 3.4H15.6M3.4 4L9.2 15.6M15.6 4L9.8 15.6"/><rect x="1.2" y="1" width="4" height="4" fill="#334d80"/><rect x="13.8" y="1" width="4" height="4" fill="#334d80"/><rect x="7.5" y="14.6" width="4" height="4" fill="#334d80"/></g></svg>
<svg style="left:1861.7px;top:115px;" width="16.4" height="12.4" viewBox="0 0 16.4 12.4"><path d="M0.2 6.2C3.4 -1.4 13 -1.4 16.2 6.2C13 13.8 3.4 13.8 0.2 6.2Z" fill="#e6e6e6"/><circle cx="8.2" cy="6" r="3.7" fill="#322d28"/><circle cx="8.2" cy="6" r="1.7" fill="#e6e6e6"/></svg>
<svg style="left:1886.6px;top:113.9px;" width="16.6" height="14.4" viewBox="0 0 16.6 14.4"><path d="M0 3H3.6L5.2 .2H11.4L13 3H16.6V14.4H0Z" fill="#e6e6e6"/><circle cx="8.6" cy="8.4" r="4.8" fill="#322d28"/><circle cx="8.6" cy="8.4" r="3.5" fill="#e6e6e6"/><circle cx="8.6" cy="8.4" r="2.3" fill="#322d28"/></svg>
<svg style="left:1861.7px;top:139.9px;" width="16.4" height="12.4" viewBox="0 0 16.4 12.4"><path d="M0.2 6.2C3.4 -1.4 13 -1.4 16.2 6.2C13 13.8 3.4 13.8 0.2 6.2Z" fill="#e6e6e6"/><circle cx="8.2" cy="6" r="3.7" fill="#322d28"/><circle cx="8.2" cy="6" r="1.7" fill="#e6e6e6"/></svg>
<svg style="left:1886.6px;top:138.8px;" width="16.6" height="14.4" viewBox="0 0 16.6 14.4"><path d="M0 3H3.6L5.2 .2H11.4L13 3H16.6V14.4H0Z" fill="#e6e6e6"/><circle cx="8.6" cy="8.4" r="4.8" fill="#322d28"/><circle cx="8.6" cy="8.4" r="3.5" fill="#e6e6e6"/><circle cx="8.6" cy="8.4" r="2.3" fill="#322d28"/></svg>
<svg style="left:1861.7px;top:164.8px;" width="16.4" height="12.4" viewBox="0 0 16.4 12.4"><path d="M0.2 6.2C3.4 -1.4 13 -1.4 16.2 6.2C13 13.8 3.4 13.8 0.2 6.2Z" fill="#e6e6e6"/><circle cx="8.2" cy="6" r="3.7" fill="#322d28"/><circle cx="8.2" cy="6" r="1.7" fill="#e6e6e6"/></svg>
<svg style="left:1886.6px;top:163.7px;" width="16.6" height="14.4" viewBox="0 0 16.6 14.4"><path d="M0 3H3.6L5.2 .2H11.4L13 3H16.6V14.4H0Z" fill="#e6e6e6"/><circle cx="8.6" cy="8.4" r="4.8" fill="#322d28"/><circle cx="8.6" cy="8.4" r="3.5" fill="#e6e6e6"/><circle cx="8.6" cy="8.4" r="2.3" fill="#322d28"/></svg>
<svg style="left:1861.7px;top:189.7px;" width="16.4" height="12.4" viewBox="0 0 16.4 12.4"><path d="M0.2 6.2C3.4 -1.4 13 -1.4 16.2 6.2C13 13.8 3.4 13.8 0.2 6.2Z" fill="#e6e6e6"/><circle cx="8.2" cy="6" r="3.7" fill="#334d80"/><circle cx="8.2" cy="6" r="1.7" fill="#e6e6e6"/></svg>
<svg style="left:1886.6px;top:188.6px;" width="16.6" height="14.4" viewBox="0 0 16.6 14.4"><path d="M0 3H3.6L5.2 .2H11.4L13 3H16.6V14.4H0Z" fill="#e6e6e6"/><circle cx="8.6" cy="8.4" r="4.8" fill="#334d80"/><circle cx="8.6" cy="8.4" r="3.5" fill="#e6e6e6"/><circle cx="8.6" cy="8.4" r="2.3" fill="#334d80"/></svg>
<div style="left:1558px;top:370px;width:361px;height:666.2px;background:#2b3236;border-radius:8px 8px 6px 6px;"></div>
<div style="left:1558px;top:401px;width:35px;height:635.2px;background:#1c1c1c;border-radius:0 0 0 6px;"></div>
<div style="left:1568.3px;top:373.8px;width:39.3px;height:23.7px;background:#322d27;border-radius:5px;box-shadow:inset 0 0 0 1px #3b3a38, 0 1px 0 rgba(15,18,20,.5);"></div>
<svg style="left:1573.5px;top:376.5px;" width="20" height="18" viewBox="0 0 20 18"><rect x=".4" y=".6" width="18" height="7.2" rx="3.6" fill="#e4e4e4"/><rect x="9.6" y="1.9" width="7.4" height="4.6" rx="2.3" fill="#322d27"/><rect x=".4" y="10" width="18" height="7.2" rx="3.6" fill="#e4e4e4"/><rect x="9.6" y="11.3" width="7.4" height="4.6" rx="2.3" fill="#322d27"/></svg>
<svg style="left:1594.3px;top:382.95px;" width="10" height="6.5" viewBox="0 0 10 6.5"><path d="M1 1 L5 5.5 L9 1" fill="none" stroke="#e0e0e0" stroke-width="1.5" stroke-linecap="round" stroke-linejoin="round"/></svg>
<div style="left:1664.7px;top:373.8px;width:143px;height:23.7px;background:#1b1b1b;border-radius:5px;box-shadow:inset 0 0 0 1px #272b2d;"></div>
<svg style="left:1670px;top:376.5px;" width="18" height="18" viewBox="0 0 18 18"><circle cx="11.2" cy="6.6" r="5" stroke="#d8d8d8" stroke-width="1.4" fill="none"/><path d="M7.6 10.4L1.4 16.6" stroke="#d8d8d8" stroke-width="1.6" stroke-linecap="round"/></svg>
<div style="left:1884.8px;top:373.8px;width:24px;height:23.7px;background:#322d27;border-radius:5px;box-shadow:inset 0 0 0 1px #3b3a38, 0 1px 0 rgba(15,18,20,.5);"></div>
<svg style="left:1891.8px;top:382.95px;" width="10" height="6.5" viewBox="0 0 10 6.5"><path d="M1 1 L5 5.5 L9 1" fill="none" stroke="#e0e0e0" stroke-width="1.5" stroke-linecap="round" stroke-linejoin="round"/></svg>
<svg style="left:1567.5px;top:419px;" width="18" height="18" viewBox="0 0 18 18"><path d="M3.6 .6V8" stroke="#b6b6b6" stroke-width="1.5"/><path d="M1.4 10.4C1.4 8.8 5.8 8.8 5.8 10.4V15.4C5.8 17.6 1.4 17.6 1.4 15.4Z" fill="#b6b6b6"/><path d="M10.2 1C9 3.6 10 6 11.8 7V16.2C11.8 17.8 14.6 17.8 14.6 16.2V7C16.4 6 17.4 3.6 16.2 1L14.6 1.4V4.6H11.8V1.4Z" fill="#b6b6b6"/></svg>
<svg style="left:1567.5px;top:463.1px;" width="18" height="17" viewBox="0 0 18 17"><path d="M0.4 3.8H4.6L5.4 1.2H10.4L11.2 3.8H17.6V16.6H0.4Z" fill="#b6b6b6"/><rect x="13.4" y="1.4" width="2.6" height="1.4" fill="#b6b6b6"/><rect x="2.2" y="6.4" width="10" height="7.6" fill="#1c1c1c"/><path d="M2.2 8.8H12.2M2.2 11.4H12.2" stroke="#4a4f55" stroke-width="1.2"/><circle cx="15" cy="8" r="1.1" fill="#1c1c1c"/><circle cx="15" cy="12.6" r="1.1" fill="#1c1c1c"/></svg>
<svg style="left:1567.5px;top:498.7px;" width="18" height="17" viewBox="0 0 18 17"><path d="M0.6 .8H17.4V8.8H15V5.2H3V8.8H.6Z" fill="#b6b6b6"/><rect x="4.4" y="6.6" width="9.2" height="10" fill="#9a9a9a"/><path d="M5.6 15.2L9 10.6L12.4 15.2Z" fill="#1c1c1c"/><circle cx="11.6" cy="9" r=".9" fill="#1c1c1c"/></svg>
<svg style="left:1566.5px;top:532.2px;" width="20" height="20" viewBox="0 0 20 20"><g stroke="#b0b0b0" stroke-width="1.2" fill="none" opacity=".8"><path d="M3.6 6.4H1.6V18.2H14V16.2"/><path d="M5.8 4.2H3.8V16H16.2V14"/></g><rect x="6.5" y="1.7" width="11.6" height="11.2" fill="#1c1c1c" stroke="#b0b0b0" stroke-width="1.4"/><path d="M7.6 12L11.4 5.8L13.4 9.2L14.6 8L17 12Z" fill="#b0b0b0"/><circle cx="15.4" cy="4.6" r="1.1" fill="#b0b0b0"/></svg>
<svg style="left:1567.5px;top:568.2px;" width="18" height="18" viewBox="0 0 18 18"><path d="M4.8 1C5.6 .4 6.2 .6 6.6 1.6L9.4 11.2C8 12.8 3.6 13.2 1 11.4Z" fill="#a8a8a8"/><circle cx="14.6" cy="3.2" r="2.5" fill="#bcbcbc"/><circle cx="12" cy="13" r="4.4" stroke="#c4c4c4" stroke-width="1.3" fill="#1c1c1c"/><path d="M10 11.2A2.6 2.6 0 0 1 12.2 10.4" stroke="#c4c4c4" stroke-width=".9" fill="none"/></svg>
<svg style="left:1567px;top:603.1px;" width="19" height="19" viewBox="0 0 19 19"><circle cx="9.5" cy="9.5" r="8" stroke="#b5604f" stroke-width="1.3" fill="none"/><path d="M1.4 17.6L17.6 1.4" stroke="#b5604f" stroke-width="1"/><path d="M5 4.6C7 3.4 9 4.2 8.6 6C8.2 7.4 6.2 7.4 6.6 9.2C7 10.6 9 10.4 9.8 11.6C10.6 13 10 14.6 8.6 15C7.8 13.6 7.6 12.4 6.2 11.6C4.8 10.8 3.6 9.4 3.6 7.4Z M11.6 7.4C12.8 6.6 14.6 7.4 14.8 9C13.8 9.6 12.2 9.2 11.6 7.4Z" fill="#b5604f"/></svg>
<svg style="left:1567.5px;top:648.4px;" width="18" height="17.2" viewBox="0 0 18 17.2"><g stroke="#d0d0d0" stroke-width="1.3" fill="none"><rect x=".8" y=".8" width="16.4" height="4"/><rect x="2" y="4.8" width="14" height="11.6"/></g><rect x="6.6" y="8" width="4.8" height="1.8" rx=".9" fill="#d0d0d0"/></svg>
<svg style="left:1567.5px;top:691.6px;" width="18" height="18" viewBox="0 0 18 18"><path d="M1 4.4V1H4.4M13.6 1H17V4.4M17 13.6V17H13.6M4.4 17H1V13.6" stroke="#c48a48" stroke-width="1.4" fill="none"/><rect x="4.2" y="4.2" width="9.6" height="9.6" rx=".7" fill="#cf8c42"/></svg>
<div style="left:1560px;top:719.3px;width:33px;height:32.7px;background:#2b3236;border-radius:5px 0 0 5px;"></div>
<svg style="left:1567px;top:725.9px;" width="19" height="19" viewBox="0 0 19 19"><path d="M12.4 1.2A5.4 5.4 0 0 0 8 8.2L1.6 14.6A2.3 2.3 0 0 0 4.8 17.8L11.2 11.4A5.4 5.4 0 0 0 18 6.8L15 9.8L11.8 9.2L11.4 6.2L14.4 3.2A5.4 5.4 0 0 0 12.4 1.2Z" fill="#5a95e8"/></svg>
<svg style="left:1567.5px;top:762px;" width="18" height="18" viewBox="0 0 18 18"><circle cx="3.6" cy="3.8" r="3" fill="#5d88d6"/><circle cx="15" cy="3.8" r="1.6" fill="#5d88d6"/><circle cx="3.6" cy="15.2" r="1.6" fill="#5d88d6"/><circle cx="15" cy="15.2" r="2.1" fill="#5d88d6"/><path d="M7.6 3.8H13.4M3.6 8V13.4M6 6.2L13.2 13.4" stroke="#5d88d6" stroke-width="1.2"/></svg>
<svg style="left:1567px;top:796.5px;" width="19" height="19" viewBox="0 0 19 19"><circle cx="8.6" cy="10.4" r="3.3" fill="#5d88d6"/><circle cx="15.4" cy="3.8" r="2" fill="#5d88d6"/><path d="M12.6 3A8 8 0 1 0 16.4 14" stroke="#5d88d6" stroke-width="1.1" fill="none"/></svg>
<svg style="left:1567px;top:831.9px;" width="19" height="19" viewBox="0 0 19 19"><path d="M2 13.4C0 9.4 3.2 5.8 7.4 4.8L14.2 1.4C16.8 .4 18.6 2.6 17.6 4.8L14.6 11.6C13.4 15.4 10.6 17.6 7.4 17.4C4.6 17.2 2.8 15.6 2 13.4Z" stroke="#5d88d6" stroke-width="1.1" fill="none"/><circle cx="7.6" cy="11.2" r="4.6" stroke="#5d88d6" stroke-width="1.1" fill="none"/><circle cx="7.6" cy="11.2" r="2.5" fill="#5d88d6"/><circle cx="15" cy="4" r="1" fill="#5d88d6"/></svg>
<svg style="left:1567px;top:867.2px;" width="19" height="18" viewBox="0 0 19 18"><g stroke="#3aa78f" stroke-width="1.2" fill="none"><path d="M3 3H16M3.4 3.4L9.2 14.6M15.6 3.4L9.8 14.6"/><rect x="1" y="1" width="3.8" height="3.8" fill="#1c1c1c"/><rect x="14.2" y="1" width="3.8" height="3.8" fill="#1c1c1c"/><rect x="7.6" y="13.4" width="3.8" height="3.8" fill="#1c1c1c"/></g></svg>
<svg style="left:1567px;top:901.5px;" width="19" height="19" viewBox="0 0 19 19"><path d="M9.5 1.3A8.2 8.2 0 0 0 1.3 9.5H9.5Z M9.5 9.5H17.7A8.2 8.2 0 0 1 9.5 17.7Z" fill="#b3806a"/><circle cx="9.5" cy="9.5" r="8.2" stroke="#b8625c" stroke-width="1.2" fill="none"/><path d="M9.5 1.3V17.7M1.3 9.5H17.7" stroke="#b8625c" stroke-width=".9"/></svg>
<svg style="left:1567.2px;top:945.7px;" width="18.6" height="18.6" viewBox="0 0 18.6 18.6"><rect x=".6" y=".6" width="17.4" height="17.4" stroke="#b4504a" stroke-width="1.2" fill="none"/><rect x="0.9" y="0.9" width="3.4" height="3.4" fill="#c08a6c"/><rect x="7.7" y="0.9" width="3.4" height="3.4" fill="#c08a6c"/><rect x="14.5" y="0.9" width="3.4" height="3.4" fill="#c08a6c"/><rect x="4.3" y="4.3" width="3.4" height="3.4" fill="#c08a6c"/><rect x="11.1" y="4.3" width="3.4" height="3.4" fill="#c08a6c"/><rect x="0.9" y="7.7" width="3.4" height="3.4" fill="#c08a6c"/><rect x="7.7" y="7.7" width="3.4" height="3.4" fill="#c08a6c"/><rect x="14.5" y="7.7" width="3.4" height="3.4" fill="#c08a6c"/><rect x="4.3" y="11.1" width="3.4" height="3.4" fill="#c08a6c"/><rect x="11.1" y="11.1" width="3.4" height="3.4" fill="#c08a6c"/><rect x="0.9" y="14.5" width="3.4" height="3.4" fill="#c08a6c"/><rect x="7.7" y="14.5" width="3.4" height="3.4" fill="#c08a6c"/><rect x="14.5" y="14.5" width="3.4" height="3.4" fill="#c08a6c"/></svg>
<svg style="left:1606.6px;top:414.4px;" width="18" height="18" viewBox="0 0 18 18"><path d="M1 4.4V1H4.4M13.6 1H17V4.4M17 13.6V17H13.6M4.4 17H1V13.6" stroke="#b4b4b4" stroke-width="1.4" fill="none"/><rect x="4.2" y="4.2" width="9.6" height="9.6" rx=".7" fill="#e6e6e6"/></svg>
<div class="t" style="top:412.8px;color:#e6e6e6;font-size:14px;left:1635.8px;">テキスト</div>
<svg style="left:1712.5px;top:418.3px;" width="8" height="11" viewBox="0 0 8 11"><path d="M1.4 1L6.2 5.5L1.4 10" stroke="#d0d0d0" stroke-width="1.5" fill="none"/></svg>
<svg style="left:1731px;top:413.8px;" width="19" height="19" viewBox="0 0 19 19"><circle cx="7.6" cy="11.4" r="6.3" stroke="#dcdcdc" stroke-width="1.3" fill="none"/><circle cx="11.6" cy="7" r="5.6" fill="#dcdcdc"/><path d="M9.2 3.4C12 3.6 14.8 6 15 9.6C16.6 7.6 16 4.4 13.8 3C12.2 2 10.4 2.2 9.2 3.4Z" fill="#2b3236"/></svg>
<div class="t" style="top:412.8px;color:#e6e6e6;font-size:14px;left:1760.5px;">マスク</div>
<svg style="left:1887.9px;top:413.3px;" width="20" height="20" viewBox="0 0 20 20"><g stroke="#a0a0a0" stroke-width="1.3" fill="none" stroke-linejoin="round" stroke-linecap="round"><path d="M10.6 2.2L17 8.6L15.4 9.4L13.6 8.2L10.4 11.4C11 12.8 10.8 13.6 10.2 14.4L5 9.2C5.8 8.6 6.6 8.4 8 9L11.2 5.8L10 4Z"/><path d="M7.4 12L1.8 17.6"/></g></svg>
<div style="left:1603.8px;top:456.3px;width:305.6px;height:23.7px;background:#57554f;border-radius:5px;box-shadow:0 1px 0 rgba(15,18,20,.55);"></div>
<svg style="left:1612.5px;top:461.8px;" width="12" height="12" viewBox="0 0 12 12"><path d="M6 .4V11.6M.4 6H11.6" stroke="#e6e6e6" stroke-width="1.3"/></svg>
<div class="t" style="top:458.3px;color:#e6e6e6;font-size:14px;left:1567.4px;width:400px;text-align:center;">モディファイアーを追加</div>
<div style="left:1603px;top:492.6px;width:307.2px;height:169.2px;background:#3a3a3a;border-radius:5px;box-sizing:border-box;border:1px solid #666;border-top:1.6px solid #466aa8;border-bottom:1.6px solid #466aa8;"></div>
<svg style="left:1612.5px;top:504.5px;" width="12" height="8" viewBox="0 0 12 8"><path d="M1 1.2L6 6.4L11 1.2" stroke="#c8c8c8" stroke-width="1.4" fill="none"/></svg>
<svg style="left:1631.2px;top:499.8px;" width="19" height="19" viewBox="0 0 19 19"><circle cx="7.6" cy="11.4" r="6.3" stroke="#dcdcdc" stroke-width="1.3" fill="none"/><circle cx="11.6" cy="7" r="5.6" fill="#dcdcdc"/><path d="M9.2 3.4C12 3.6 14.8 6 15 9.6C16.6 7.6 16 4.4 13.8 3C12.2 2 10.4 2.2 9.2 3.4Z" fill="#3a3a3a"/></svg>
<div style="left:1664px;top:498px;width:58.2px;height:23.2px;background:#1b1b1b;border-radius:5px 0 0 5px;box-shadow:0 1px 0 rgba(15,18,20,.55);"></div>
<div class="t" style="top:499px;color:#e6e6e6;font-size:14px;left:1673.6px;">マスク</div>
<div style="left:1722.2px;top:498px;width:24.9px;height:23.2px;background:#4b4d53;box-shadow:0 1px 0 rgba(15,18,20,.55);"></div>
<div style="left:1747.6px;top:498px;width:24.5px;height:23.2px;background:#57554f;box-shadow:0 1px 0 rgba(15,18,20,.55);"></div>
<div style="left:1772.6px;top:498px;width:24.5px;height:23.2px;background:#4772b3;box-shadow:0 1px 0 rgba(15,18,20,.55);"></div>
<div style="left:1797.6px;top:498px;width:24.6px;height:23.2px;background:#4772b3;box-shadow:0 1px 0 rgba(15,18,20,.55);"></div>
<div style="left:1822.2px;top:498px;width:24.6px;height:23.2px;background:#322d27;border-radius:0 5px 5px 0;box-shadow:0 1px 0 rgba(15,18,20,.55);"></div>
<svg style="left:1725.7px;top:500px;" width="18" height="19" viewBox="0 0 18 19"><g stroke="#d0d0d0" stroke-width="1.2" fill="none"><path d="M3 3H15M3.4 3.4L8.8 15M14.6 3.4L9.2 15"/><rect x=".8" y=".8" width="4" height="4" fill="#4b4d53"/><rect x="13.2" y=".8" width="4" height="4" fill="#4b4d53"/><rect x="7" y="14" width="4" height="4" fill="#4b4d53"/></g></svg>
<svg style="left:1750.8px;top:500.5px;" width="18" height="18" viewBox="0 0 18 18"><g stroke="#d0d0d0" stroke-width="1.2" fill="none"><path d="M3 3.4H13M3 3.4V15M3 15H15M15 8V15"/><rect x=".8" y="1.4" width="4" height="4" fill="#57554f"/><rect x=".8" y="13" width="4" height="4" fill="#57554f"/><rect x="13" y="13" width="4" height="4" fill="#57554f"/></g><rect x="11.8" y=".2" width="6" height="6" fill="#ececec"/></svg>
<svg style="left:1775.8px;top:501.8px;" width="18" height="16" viewBox="0 0 18 16"><rect x=".8" y=".8" width="16.4" height="10.4" rx="1.2" stroke="#f4f4f4" stroke-width="1.5" fill="none"/><rect x="2.4" y="2.4" width="13.2" height="7.2" fill="#f4f4f4"/><path d="M9 11.6V14.6M4.6 15H13.4" stroke="#f4f4f4" stroke-width="1.3"/></svg>
<svg style="left:1801.7px;top:502.1px;" width="16.6" height="14.4" viewBox="0 0 16.6 14.4"><path d="M0 3H3.6L5.2 .2H11.4L13 3H16.6V14.4H0Z" fill="#f4f4f4"/><circle cx="8.4" cy="8.4" r="4.8" fill="#4772b3"/><circle cx="8.4" cy="8.4" r="3.5" fill="#f4f4f4"/><circle cx="8.4" cy="8.4" r="2.2" fill="#4772b3"/></svg>
<svg style="left:1829px;top:506.8px;" width="11" height="7" viewBox="0 0 11 7"><path d="M1 1 L5.5 6 L10 1" fill="none" stroke="#e0e0e0" stroke-width="1.5" stroke-linecap="round" stroke-linejoin="round"/></svg>
<svg style="left:1854.5px;top:503.4px;" width="12" height="12" viewBox="0 0 12 12"><path d="M1 1L11 11M11 1L1 11" stroke="#dcdcdc" stroke-width="1.4" stroke-linecap="round"/></svg>
<svg style="left:1887px;top:505.6px;" width="14" height="6" viewBox="0 0 14 6"><rect x="0" y="0" width="2" height="2" fill="#9a9a9a"/><rect x="3.9" y="0" width="2" height="2" fill="#9a9a9a"/><rect x="7.8" y="0" width="2" height="2" fill="#9a9a9a"/><rect x="11.7" y="0" width="2" height="2" fill="#9a9a9a"/><rect x="0" y="3.9" width="2" height="2" fill="#9a9a9a"/><rect x="3.9" y="3.9" width="2" height="2" fill="#9a9a9a"/><rect x="7.8" y="3.9" width="2" height="2" fill="#9a9a9a"/><rect x="11.7" y="3.9" width="2" height="2" fill="#9a9a9a"/></svg>
<div style="left:1614px;top:534.8px;width:141.2px;height:23.2px;background:#4772b3;border-radius:5px 0 0 5px;box-shadow:0 1px 0 rgba(15,18,20,.55);"></div>
<div style="left:1755.2px;top:534.8px;width:143.6px;height:23.2px;background:#57554f;border-radius:0 5px 5px 0;box-shadow:0 1px 0 rgba(15,18,20,.55);"></div>
<div class="t" style="top:535.5px;color:#ffffff;font-size:14px;left:1484px;width:400px;text-align:center;">頂点グループ</div>
<div class="t" style="top:535.5px;color:#e6e6e6;font-size:14px;left:1627.3px;width:400px;text-align:center;">アーマチュア</div>
<div class="t" style="top:567px;color:#e6e6e6;font-size:14px;left:1311.6px;width:400px;text-align:right;">頂点グループ</div>
<div style="left:1724px;top:566.3px;width:125.3px;height:22.5px;background:#1b1b1b;border-radius:5px 0 0 5px;box-shadow:0 1px 0 rgba(15,18,20,.55);"></div>
<div style="left:1849.3px;top:566.3px;width:24.5px;height:22.5px;background:#57554f;border-radius:0 5px 5px 0;box-shadow:0 1px 0 rgba(15,18,20,.55);"></div>
<svg style="left:1728.8px;top:567.8px;" width="19" height="19" viewBox="0 0 19 19"><rect x="0.4" y="4.2" width="4.8" height="4.8" fill="#e0e0e0"/><rect x="0.4" y="10.4" width="4.8" height="4.8" fill="#e0e0e0"/><rect x="6.6" y="6.8" width="4.8" height="4.8" fill="#e0e0e0"/><rect x="6.6" y="13" width="4.8" height="4.8" fill="#e0e0e0"/><g stroke="#c4c4c4" stroke-width="1" fill="none"><rect x="7.1" y="1" width="3.8" height="3.8"/><rect x="13.6" y="4.6" width="3.8" height="3.8"/><rect x="13.6" y="11" width="3.8" height="3.8"/></g></svg>
<div class="t" style="top:566.7px;color:#e6e6e6;font-size:14px;left:1755.2px;">Wipe</div>
<svg style="left:1830px;top:571.4px;" width="12" height="12" viewBox="0 0 12 12"><path d="M1.2 1.2L10.8 10.8M10.8 1.2L1.2 10.8" stroke="#dcdcdc" stroke-width="1.3" stroke-linecap="round"/></svg>
<svg style="left:1853px;top:572.4px;" width="18" height="10" viewBox="0 0 18 10"><path d="M1.2 5H16.8M4.8 1.2L1 5L4.8 8.8M13.2 1.2L17 5L13.2 8.8" stroke="#e6e6e6" stroke-width="1.4" fill="none"/></svg>
<div style="left:1724px;top:600px;width:17.2px;height:17.4px;background:#57554f;border-radius:3.5px;box-shadow:0 1px 0 rgba(15,18,20,.55);"></div>
<div class="t" style="top:597.9px;color:#e6e6e6;font-size:14px;left:1745.6px;">スムーズ</div>
<div style="left:1884.7px;top:605.9px;width:5.2px;height:5.2px;background:#e0e0e0;border-radius:50%;"></div>
<div class="t" style="top:628.2px;color:#e6e6e6;font-size:14px;left:1311.6px;width:400px;text-align:right;">しきい値</div>
<div style="left:1724px;top:628px;width:149.8px;height:23.3px;background:#57554f;border-radius:5px;box-shadow:0 1px 0 rgba(15,18,20,.55);"></div>
<div class="t" style="top:629px;color:#e6e6e6;font-size:14px;letter-spacing:0.6px;left:1598.3px;width:400px;text-align:center;">0.000</div>
<div style="left:1884.7px;top:637.1px;width:5.2px;height:5.2px;background:#e0e0e0;border-radius:50%;"></div>
<div class="t" style="top:1040px;color:#8c8c8c;font-size:14px;left:1503.5px;width:400px;text-align:right;">4.0.1</div>
<div style="left:1px;top:907px;width:1554px;height:129px;background:#1c1c1c;border-radius:7px 5px 4px 4px;overflow:hidden;">
<div style="left:0;top:0;width:1554px;height:30.5px;background:#2b3236;"></div>
<div style="left:57px;top:60px;width:1439.47px;height:69px;background:#2b3236;"></div>
<svg style="left:0;top:0" width="1554" height="129"><path d="M109.03 60V129 M166.84 60V129 M224.65 60V129 M282.46 60V129 M340.27 60V129 M398.08 60V129 M455.89 60V129 M513.70 60V129 M571.51 60V129 M629.32 60V129 M687.13 60V129 M744.94 60V129 M802.75 60V129 M860.56 60V129 M918.37 60V129 M976.18 60V129 M1033.99 60V129 M1091.80 60V129 M1149.61 60V129 M1207.42 60V129 M1265.23 60V129 M1323.04 60V129 M1380.85 60V129 M1438.66 60V129 M1496.47 60V129" stroke="#1e2023" stroke-width="1.1"/><path d="M80.12 60V129 M137.93 60V129 M195.74 60V129 M253.55 60V129 M311.36 60V129 M369.17 60V129 M426.98 60V129 M484.79 60V129 M542.60 60V129 M600.41 60V129 M658.22 60V129 M716.03 60V129 M773.84 60V129 M831.65 60V129 M889.46 60V129 M947.27 60V129 M1005.08 60V129 M1062.89 60V129 M1120.70 60V129 M1178.51 60V129 M1236.32 60V129 M1294.13 60V129 M1351.94 60V129 M1409.75 60V129 M1467.56 60V129" stroke="#33352f" stroke-width="1"/></svg>
</div>
<div style="left:10.3px;top:911.3px;width:39.3px;height:23.7px;background:#322d27;border-radius:5px;box-shadow:inset 0 0 0 1px #3b3a38, 0 1px 0 rgba(15,18,20,.5);"></div>
<svg style="left:16px;top:914.2px;" width="18" height="18" viewBox="0 0 18 18"><circle cx="9" cy="9" r="8.6" fill="#ececec"/><path d="M11.4 3.6L6.6 9.2L11.4 14" stroke="#322d27" stroke-width="2" fill="none" stroke-linejoin="miter"/></svg>
<svg style="left:36.5px;top:921.05px;" width="10" height="6.5" viewBox="0 0 10 6.5"><path d="M1 1 L5 5.5 L9 1" fill="none" stroke="#e0e0e0" stroke-width="1.5" stroke-linecap="round" stroke-linejoin="round"/></svg>
<div style="left:56.5px;top:911.3px;width:161px;height:23.7px;background:#322d27;border-radius:5px;box-shadow:inset 0 0 0 1px #3b3a38, 0 1px 0 rgba(15,18,20,.5);"></div>
<div style="left:115.2px;top:912.3px;width:0.8px;height:21.7px;background:#3f3c38;"></div>
<div class="t" style="top:913.2px;color:#e6e6e6;font-size:14px;left:66px;">再生</div>
<svg style="left:102.3px;top:921.05px;" width="10" height="6.5" viewBox="0 0 10 6.5"><path d="M1 1 L5 5.5 L9 1" fill="none" stroke="#e0e0e0" stroke-width="1.5" stroke-linecap="round" stroke-linejoin="round"/></svg>
<div class="t" style="top:913.2px;color:#e6e6e6;font-size:14px;left:124.5px;">キーイング</div>
<svg style="left:204.2px;top:921.05px;" width="10" height="6.5" viewBox="0 0 10 6.5"><path d="M1 1 L5 5.5 L9 1" fill="none" stroke="#e0e0e0" stroke-width="1.5" stroke-linecap="round" stroke-linejoin="round"/></svg>
<div class="t" style="top:913.2px;color:#dcdcdc;font-size:14px;left:229.5px;">ビュー</div>
<div class="t" style="top:913.2px;color:#dcdcdc;font-size:14px;left:289.8px;">マーカー</div>
<div style="left:663px;top:911.3px;width:23px;height:23.7px;background:#57554f;border-radius:5px 0 0 5px;box-shadow:0 1px 0 rgba(15,18,20,.55);"></div>
<div style="left:686px;top:911.3px;width:24.6px;height:23.7px;background:#322d27;border-radius:0 5px 5px 0;box-shadow:0 1px 0 rgba(15,18,20,.55);"></div>
<div style="left:669.4px;top:918px;width:10.4px;height:10.4px;background:#ececec;border-radius:50%;"></div>
<svg style="left:693.3px;top:921.05px;" width="10" height="6.5" viewBox="0 0 10 6.5"><path d="M1 1 L5 5.5 L9 1" fill="none" stroke="#4e6075" stroke-width="1.5" stroke-linecap="round" stroke-linejoin="round"/></svg>
<div style="left:719.1px;top:911.3px;width:148px;height:23.7px;background:#57554f;border-radius:5px;box-shadow:0 1px 0 rgba(15,18,20,.55);"></div>
<div style="left:741.9px;top:911.3px;width:1px;height:23.7px;background:#3d3c39;"></div>
<div style="left:766.9px;top:911.3px;width:1px;height:23.7px;background:#3d3c39;"></div>
<div style="left:792px;top:911.3px;width:1px;height:23.7px;background:#3d3c39;"></div>
<div style="left:817px;top:911.3px;width:1px;height:23.7px;background:#3d3c39;"></div>
<div style="left:842.1px;top:911.3px;width:1px;height:23.7px;background:#3d3c39;"></div>
<svg style="left:719px;top:911.3px;" width="150" height="24" viewBox="0 0 150 24"><g fill="#ececec"><rect x="5" y="5.4" width="2.7" height="13.2"/><path d="M17.2 5.6V18.4L9.2 12Z"/><path d="M31.4 6.2L37.2 12L31.4 17.8L25.6 12Z"/><path d="M45.2 6.6V17.4L38.6 12Z"/><path d="M67.2 4.6V19.4L54.8 12Z"/><path d="M80 4.6V19.4L92.4 12Z"/><path d="M102 6.6V17.4L108.6 12Z"/><path d="M115.4 6.2L121.2 12L115.4 17.8L109.6 12Z"/><path d="M130.8 5.6V18.4L138.8 12Z"/><rect x="140" y="5.4" width="2.7" height="13.2"/></g></svg>
<div style="left:1205px;top:911.3px;width:91.1px;height:23.7px;background:#57554f;border-radius:5px;box-shadow:0 1px 0 rgba(15,18,20,.55);"></div>
<div class="t" style="top:912.8px;color:#e6e6e6;font-size:14px;left:1049.6px;width:400px;text-align:center;">1</div>
<div style="left:1303.7px;top:911.3px;width:241.7px;height:23.7px;background:#57554f;border-radius:5px;box-shadow:0 1px 0 rgba(15,18,20,.55);"></div>
<div style="left:1327px;top:911.3px;width:1px;height:23.7px;background:#403f3b;"></div>
<div style="left:1436px;top:911.3px;width:1px;height:23.7px;background:#403f3b;"></div>
<svg style="left:1306.7px;top:914.4px;" width="18" height="18" viewBox="0 0 18 18"><circle cx="9" cy="10" r="6.9" stroke="#e6e6e6" stroke-width="1.3" fill="none"/><path d="M9 5.8V10.2H12.4M7 1.4H11M9 1.4V3M14.2 4.6L15.8 3" stroke="#e6e6e6" stroke-width="1.3" fill="none"/></svg>
<div class="t" style="top:912.8px;color:#e6e6e6;font-size:14px;left:1347.3px;">開始</div>
<div class="t" style="top:912.8px;color:#e6e6e6;font-size:14px;left:1017.3px;width:400px;text-align:right;">1</div>
<div class="t" style="top:912.8px;color:#e6e6e6;font-size:14px;left:1456px;">終了</div>
<div class="t" style="top:912.8px;color:#e6e6e6;font-size:14px;letter-spacing:0.9px;left:1128.8px;width:400px;text-align:right;">250</div>
<div class="t" style="top:942.1px;color:#c2c2c2;font-size:15px;left:-89.671px;width:400px;text-align:center;">10</div>
<div class="t" style="top:942.1px;color:#c2c2c2;font-size:15px;left:-31.861px;width:400px;text-align:center;">20</div>
<div class="t" style="top:942.1px;color:#c2c2c2;font-size:15px;left:25.949px;width:400px;text-align:center;">30</div>
<div class="t" style="top:942.1px;color:#c2c2c2;font-size:15px;left:83.759px;width:400px;text-align:center;">40</div>
<div class="t" style="top:942.1px;color:#c2c2c2;font-size:15px;left:141.569px;width:400px;text-align:center;">50</div>
<div class="t" style="top:942.1px;color:#c2c2c2;font-size:15px;left:199.379px;width:400px;text-align:center;">60</div>
<div class="t" style="top:942.1px;color:#c2c2c2;font-size:15px;left:257.189px;width:400px;text-align:center;">70</div>
<div class="t" style="top:942.1px;color:#c2c2c2;font-size:15px;left:314.999px;width:400px;text-align:center;">80</div>
<div class="t" style="top:942.1px;color:#c2c2c2;font-size:15px;left:372.809px;width:400px;text-align:center;">90</div>
<div class="t" style="top:942.1px;color:#c2c2c2;font-size:15px;left:430.619px;width:400px;text-align:center;">100</div>
<div class="t" style="top:942.1px;color:#c2c2c2;font-size:15px;left:488.429px;width:400px;text-align:center;">110</div>
<div class="t" style="top:942.1px;color:#c2c2c2;font-size:15px;left:546.239px;width:400px;text-align:center;">120</div>
<div class="t" style="top:942.1px;color:#c2c2c2;font-size:15px;left:604.049px;width:400px;text-align:center;">130</div>
<div class="t" style="top:942.1px;color:#c2c2c2;font-size:15px;left:661.859px;width:400px;text-align:center;">140</div>
<div class="t" style="top:942.1px;color:#c2c2c2;font-size:15px;left:719.669px;width:400px;text-align:center;">150</div>
<div class="t" style="top:942.1px;color:#c2c2c2;font-size:15px;left:777.479px;width:400px;text-align:center;">160</div>
<div class="t" style="top:942.1px;color:#c2c2c2;font-size:15px;left:835.289px;width:400px;text-align:center;">170</div>
<div class="t" style="top:942.1px;color:#c2c2c2;font-size:15px;left:893.099px;width:400px;text-align:center;">180</div>
<div class="t" style="top:942.1px;color:#c2c2c2;font-size:15px;left:950.909px;width:400px;text-align:center;">190</div>
<div class="t" style="top:942.1px;color:#c2c2c2;font-size:15px;left:1008.72px;width:400px;text-align:center;">200</div>
<div class="t" style="top:942.1px;color:#c2c2c2;font-size:15px;left:1066.53px;width:400px;text-align:center;">210</div>
<div class="t" style="top:942.1px;color:#c2c2c2;font-size:15px;left:1124.34px;width:400px;text-align:center;">220</div>
<div class="t" style="top:942.1px;color:#c2c2c2;font-size:15px;left:1182.15px;width:400px;text-align:center;">230</div>
<div class="t" style="top:942.1px;color:#c2c2c2;font-size:15px;left:1239.96px;width:400px;text-align:center;">240</div>
<div class="t" style="top:942.1px;color:#c2c2c2;font-size:15px;left:1297.77px;width:400px;text-align:center;">250</div>
<div style="left:57px;top:963px;width:2px;height:73px;background:#4b7cc9;"></div>
<div style="left:42.5px;top:941.6px;width:30.2px;height:21.5px;background:#4772b3;border-radius:4.5px;"></div>
<div class="t" style="top:942.1px;color:#ffffff;font-size:15px;left:-142.2px;width:400px;text-align:center;">1</div>
<div style="left:11.2px;top:1022.8px;width:1532.4px;height:11px;background:#585650;border-radius:5.5px;"></div>
<div style="left:13.2px;top:1024.9px;width:6.8px;height:6.8px;background:#1c1c1c;border-radius:50%;"></div>
<div style="left:1534.8px;top:1024.9px;width:6.8px;height:6.8px;background:#1c1c1c;border-radius:50%;"></div>
<svg style="left:1px;top:959.5px;" width="8" height="11" viewBox="0 0 8 11"><path d="M1.2 1L6 5.5L1.2 10" stroke="#8c8c8c" stroke-width="1.4" fill="none"/></svg>
<div style="left:1548.5px;top:950px;width:4.7px;height:59.5px;background:#2b3236;border-radius:2.5px;"></div>
<svg style="left:1547.6px;top:959.5px;" width="7" height="11" viewBox="0 0 7 11"><path d="M5.6 1L1.4 5.5L5.6 10" stroke="#7f8a92" stroke-width="1.3" fill="none"/></svg>
<svg style="left:15px;top:1041.2px;" width="14" height="19" viewBox="0 0 14 19"><rect x=".8" y=".8" width="12.4" height="17.4" rx="5" stroke="#c4c4c4" stroke-width="1.3" fill="none"/><path d="M.6 8V5.8A5.2 5.2 0 0 1 5.8 .6H6.4V8Z" fill="#a8a8a8"/></svg>
<svg style="left:296.3px;top:1041.2px;" width="14" height="19" viewBox="0 0 14 19"><rect x=".8" y=".8" width="12.4" height="17.4" rx="5" stroke="#c4c4c4" stroke-width="1.3" fill="none"/><rect x="5.2" y="2.6" width="3.6" height="6.6" rx="1.6" fill="#c4c4c4"/></svg>
<svg style="left:576.9px;top:1041.2px;" width="14" height="19" viewBox="0 0 14 19"><rect x=".8" y=".8" width="12.4" height="17.4" rx="5" stroke="#c4c4c4" stroke-width="1.3" fill="none"/><path d="M13.4 8V5.8A5.2 5.2 0 0 0 8.2 .6H7.6V8Z" fill="#a8a8a8"/></svg>
</div></body></html>
